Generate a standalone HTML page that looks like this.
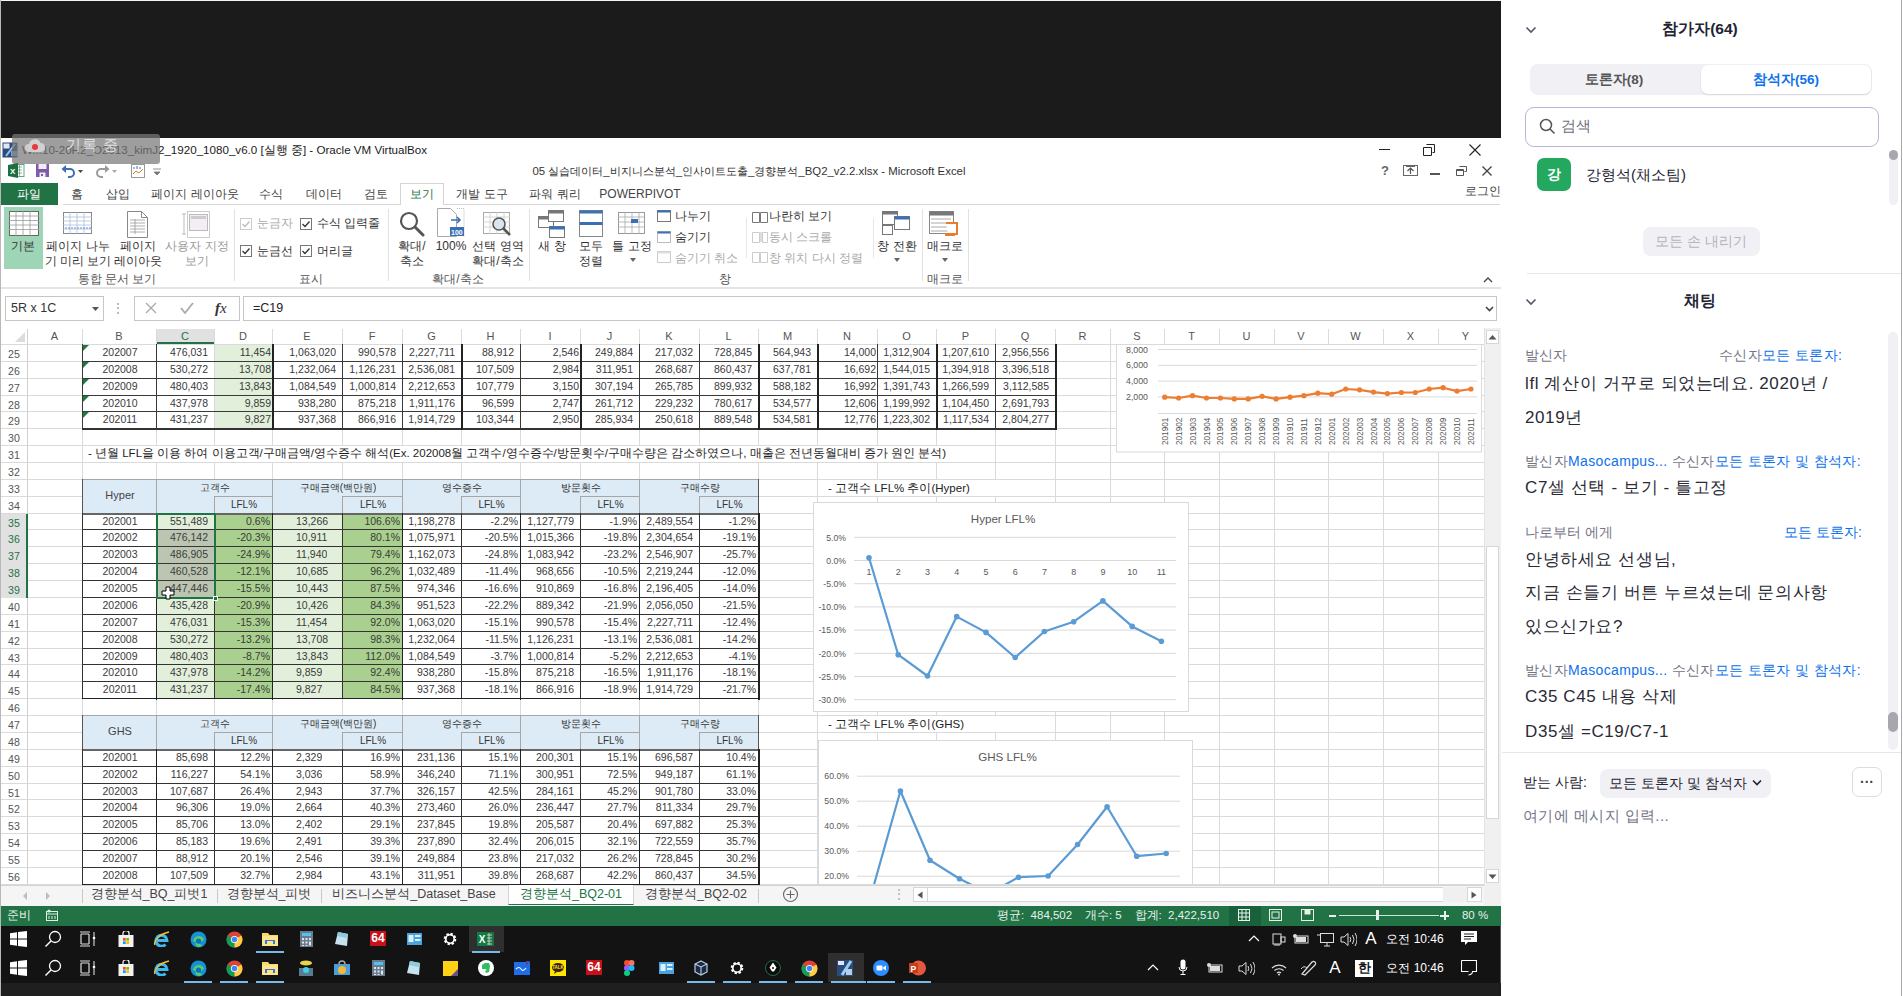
<!DOCTYPE html><html><head><meta charset="utf-8"><style>
html,body{margin:0;padding:0;}
body{width:1903px;height:996px;overflow:hidden;position:relative;background:#fff;font-family:"Liberation Sans",sans-serif;color:#222;}
div{box-sizing:border-box;}
.c{position:absolute;white-space:nowrap;overflow:hidden;font-size:10.5px;line-height:17px;color:#333;}
</style></head><body>
<div style="position:absolute;left:0px;top:0px;width:1903px;height:1px;background:#f4f4f4"></div>
<div style="position:absolute;left:0px;top:1px;width:1501px;height:137px;background:#1b1b1b"></div>
<div style="position:absolute;left:0px;top:0px;width:1px;height:996px;background:#b8b8b8"></div>
<div style="position:absolute;left:1px;top:138px;width:1500px;height:22px;background:#fff"></div>
<svg style="position:absolute;left:2px;top:142px" width="17" height="16" viewBox="0 0 17 16">
<rect x="0.5" y="0.5" width="15" height="15" fill="#2b4a7e"/><rect x="1.5" y="1.5" width="6" height="5" fill="#dfe8f4"/>
<path d="M4 14 L13 2" stroke="#9cc3e8" stroke-width="2"/><rect x="9" y="9" width="6" height="5" fill="#7fa6d0"/></svg>
<div style="position:absolute;left:22px;top:141px;white-space:nowrap;font-size:11.6px;line-height:18px;color:#1a1a1a;">W...10-20H2_O2013_kimJ2_1920_1080_v6.0 [실행 중] - Oracle VM VirtualBox</div>
<div style="position:absolute;left:1379px;top:149px;width:11px;height:1px;background:#222"></div>
<svg style="position:absolute;left:1423px;top:144px" width="12" height="12" viewBox="0 0 12 12"><path d="M3.5 0.5h8v8h-2M0.5 3.5h8v8h-8z" fill="none" stroke="#222" stroke-width="1"/></svg>
<svg style="position:absolute;left:1469px;top:144px" width="12" height="12" viewBox="0 0 12 12"><path d="M0.5 0.5L11.5 11.5M11.5 0.5L0.5 11.5" stroke="#222" stroke-width="1.1"/></svg>
<div style="position:absolute;left:12px;top:134px;width:148px;height:30px;background:rgba(120,120,120,0.72);border-radius:3px"></div>
<svg style="position:absolute;left:24px;top:137px" width="22" height="20" viewBox="0 0 22 20"><path d="M5 15 a4 4 0 0 1 0-8 a6 6 0 0 1 11.5-1 a4.5 4.5 0 0 1 0.5 9z" fill="#d9d9d9" opacity="0.85"/><circle cx="11" cy="10" r="3" fill="#e8383b"/></svg>
<div style="position:absolute;left:66px;top:135px;white-space:nowrap;font-size:15px;line-height:20px;color:rgba(235,235,235,0.9);letter-spacing:1px">기록 중</div>
<svg style="position:absolute;left:8px;top:163px" width="17" height="15" viewBox="0 0 17 15"><rect x="7" y="1.5" width="9" height="12" fill="#fff" stroke="#6aa482"/><path d="M9 4h5M9 7h5M9 10h5M11.5 2v11" stroke="#6aa482" stroke-width="0.8"/><path d="M0 2 L10 0 V15 L0 13z" fill="#1d6f42"/><text x="2" y="11" font-size="8" font-family="Liberation Sans" font-weight="bold" fill="#fff">X</text></svg>
<svg style="position:absolute;left:36px;top:164px" width="13" height="13" viewBox="0 0 13 13"><path d="M0 0h13v13h-13z" fill="#7d5ba6"/><rect x="2.5" y="0" width="8" height="5" fill="#f1edf6"/><rect x="3.5" y="8.5" width="6" height="4.5" fill="#f1edf6"/><rect x="5" y="10" width="2" height="2" fill="#7d5ba6"/></svg>
<svg style="position:absolute;left:61px;top:164px" width="22" height="14" viewBox="0 0 22 14"><path d="M3 5 h6 a4 4 0 0 1 0 8 h-2" fill="none" stroke="#3b6fb6" stroke-width="2"/><path d="M0.5 5 L5 1 V9z" fill="#3b6fb6"/><path d="M17 6 l2.5 3 l2.5-3z" fill="#444"/></svg>
<svg style="position:absolute;left:95px;top:164px" width="22" height="14" viewBox="0 0 22 14"><path d="M12 5 h-6 a4 4 0 0 0 0 8 h2" fill="none" stroke="#9a9a9a" stroke-width="2"/><path d="M14.5 5 L10 1 V9z" fill="#9a9a9a"/><path d="M17 6 l2.5 3 l2.5-3z" fill="#aaa"/></svg>
<svg style="position:absolute;left:131px;top:164px" width="14" height="14" viewBox="0 0 14 14"><rect x="0.5" y="0.5" width="13" height="13" fill="#fff" stroke="#999"/><path d="M2 10 l3-3 l3 2 l4-4" stroke="#e07b2c" fill="none"/><path d="M3 5v-2M6 5v-3M9 5v-2" stroke="#3b6fb6"/></svg>
<svg style="position:absolute;left:153px;top:168px" width="8" height="8" viewBox="0 0 8 8"><path d="M0 1h8M1 4l3 3l3-3z" stroke="#777" fill="#777" stroke-width="0.8"/></svg>
<div style="position:absolute;left:449px;top:163px;width:600px;text-align:center;white-space:nowrap;font-size:11.4px;line-height:17px;color:#333">05 실습데이터_비지니스분석_인사이트도출_경향분석_BQ2_v2.2.xlsx - Microsoft Excel</div>
<div style="position:absolute;left:1085px;top:162px;width:600px;text-align:center;white-space:nowrap;font-size:13px;font-weight:bold;line-height:17px;color:#666">?</div>
<svg style="position:absolute;left:1403px;top:165px" width="15" height="11" viewBox="0 0 15 11"><rect x="0.5" y="0.5" width="14" height="10" fill="none" stroke="#666"/><path d="M7.5 9V3M4.5 6l3-3l3 3" stroke="#555" fill="none" stroke-width="1.2"/><path d="M3 1.5h9" stroke="#666"/></svg>
<div style="position:absolute;left:1430px;top:173px;width:10px;height:1.5px;background:#555"></div>
<svg style="position:absolute;left:1456px;top:166px" width="11" height="10" viewBox="0 0 11 10"><path d="M3.5 0.5h7v5h-2M0.5 3.5h7v6h-7zM0.5 4.5h7" fill="none" stroke="#555"/></svg>
<svg style="position:absolute;left:1482px;top:166px" width="10" height="10" viewBox="0 0 10 10"><path d="M0.5 0.5L9.5 9.5M9.5 0.5L0.5 9.5" stroke="#444" stroke-width="1.4"/></svg>
<div style="position:absolute;left:1px;top:183px;width:57px;height:22px;background:#217346"></div>
<div style="position:absolute;left:-271px;top:184px;width:600px;text-align:center;white-space:nowrap;font-size:12px;line-height:20px;color:#fff">파일</div>
<div style="position:absolute;left:63px;top:204px;width:1437px;height:1px;background:#d6d6d6"></div>
<div style="position:absolute;left:-223px;top:184px;width:600px;text-align:center;white-space:nowrap;font-size:12px;line-height:20px;color:#444">홈</div>
<div style="position:absolute;left:-182px;top:184px;width:600px;text-align:center;white-space:nowrap;font-size:12px;line-height:20px;color:#444">삽입</div>
<div style="position:absolute;left:-105px;top:184px;width:600px;text-align:center;white-space:nowrap;font-size:12px;line-height:20px;color:#444">페이지 레이아웃</div>
<div style="position:absolute;left:-29px;top:184px;width:600px;text-align:center;white-space:nowrap;font-size:12px;line-height:20px;color:#444">수식</div>
<div style="position:absolute;left:24px;top:184px;width:600px;text-align:center;white-space:nowrap;font-size:12px;line-height:20px;color:#444">데이터</div>
<div style="position:absolute;left:76px;top:184px;width:600px;text-align:center;white-space:nowrap;font-size:12px;line-height:20px;color:#444">검토</div>
<div style="position:absolute;left:182px;top:184px;width:600px;text-align:center;white-space:nowrap;font-size:12px;line-height:20px;color:#444">개발 도구</div>
<div style="position:absolute;left:255px;top:184px;width:600px;text-align:center;white-space:nowrap;font-size:12px;line-height:20px;color:#444">파워 쿼리</div>
<div style="position:absolute;left:340px;top:184px;width:600px;text-align:center;white-space:nowrap;font-size:12px;line-height:20px;color:#444">POWERPIVOT</div>
<div style="position:absolute;left:400px;top:183px;width:44px;height:22px;background:#fff;border:1px solid #d4d4d4;border-bottom:none"></div>
<div style="position:absolute;left:122px;top:184px;width:600px;text-align:center;white-space:nowrap;font-size:12px;line-height:20px;color:#217346">보기</div>
<div style="position:absolute;left:1183px;top:183px;width:600px;text-align:center;white-space:nowrap;font-size:11.5px;line-height:17px;color:#444">로그인</div>
<div style="position:absolute;left:1px;top:205px;width:1500px;height:82px;background:#fff"></div>
<div style="position:absolute;left:1px;top:287px;width:1500px;height:2px;background:#e4e4e4"></div>
<div style="position:absolute;left:234px;top:209px;width:1px;height:72px;background:#e1e1e1"></div>
<div style="position:absolute;left:388px;top:209px;width:1px;height:72px;background:#e1e1e1"></div>
<div style="position:absolute;left:529px;top:209px;width:1px;height:72px;background:#e1e1e1"></div>
<div style="position:absolute;left:922px;top:209px;width:1px;height:72px;background:#e1e1e1"></div>
<div style="position:absolute;left:968px;top:209px;width:1px;height:72px;background:#e1e1e1"></div>
<div style="position:absolute;left:746px;top:218px;width:1px;height:40px;background:#e6e6e6"></div>
<div style="position:absolute;left:873px;top:218px;width:1px;height:40px;background:#e6e6e6"></div>
<div style="position:absolute;left:4px;top:207px;width:39px;height:62px;background:#9fd5b7"></div>
<svg style="position:absolute;left:9px;top:211px" width="30" height="25" viewBox="0 0 30 25"><rect x="0.5" y="0.5" width="29" height="24" fill="#fff" stroke="#666"/>
<path d="M0 5h30M0 9.5h30M0 14h30M0 18.5h30M7 0v25M14 0v25M21 0v25" stroke="#999" stroke-width="0.8"/></svg>
<div style="position:absolute;left:-277px;top:238px;width:600px;text-align:center;white-space:nowrap;font-size:12px;line-height:16px;color:#333">기본</div>
<svg style="position:absolute;left:63px;top:212px" width="30" height="23" viewBox="0 0 30 23"><rect x="0.5" y="0.5" width="28" height="21" fill="#fff" stroke="#888"/>
<path d="M0 5h29M0 9h29M0 13h29M0 17h29M7 0v22M14 0v22M21 0v22" stroke="#a9bfde" stroke-width="0.8"/><path d="M2 16h26" stroke="#6f8fc7" stroke-dasharray="2 1"/></svg>
<div style="position:absolute;left:-222px;top:238px;width:600px;text-align:center;white-space:nowrap;font-size:12px;line-height:16px;color:#333">페이지 나누</div>
<div style="position:absolute;left:-222px;top:253px;width:600px;text-align:center;white-space:nowrap;font-size:12px;line-height:16px;color:#333">기 미리 보기</div>
<svg style="position:absolute;left:127px;top:211px" width="22" height="27" viewBox="0 0 22 27"><path d="M0.5 0.5h14l6 6v20h-20z" fill="#fff" stroke="#888"/><path d="M14.5 0.5v6h6" fill="none" stroke="#888"/>
<path d="M3 9h15M3 12h15M3 15h15M3 18h15M3 21h15M8 8v15" stroke="#999" stroke-width="0.8"/></svg>
<div style="position:absolute;left:-162px;top:238px;width:600px;text-align:center;white-space:nowrap;font-size:12px;line-height:16px;color:#333">페이지</div>
<div style="position:absolute;left:-162px;top:253px;width:600px;text-align:center;white-space:nowrap;font-size:12px;line-height:16px;color:#333">레이아웃</div>
<svg style="position:absolute;left:181px;top:211px" width="30" height="27" viewBox="0 0 30 27"><rect x="6.5" y="0.5" width="22" height="26" fill="#fff" stroke="#ccc"/><rect x="8.5" y="3.5" width="18" height="16" fill="#f3eef5" stroke="#bbb"/><rect x="10" y="5" width="15" height="3" fill="#ccc"/><path d="M3 3v20M1 3h4M1 23h4" stroke="#bbb"/></svg>
<div style="position:absolute;left:-103px;top:238px;width:600px;text-align:center;white-space:nowrap;font-size:12px;line-height:16px;color:#999">사용자 지정</div>
<div style="position:absolute;left:-103px;top:253px;width:600px;text-align:center;white-space:nowrap;font-size:12px;line-height:16px;color:#999">보기</div>
<div style="position:absolute;left:-183px;top:271px;width:600px;text-align:center;white-space:nowrap;font-size:12px;line-height:16px;color:#555">통합 문서 보기</div>
<svg style="position:absolute;left:240px;top:218px" width="12" height="12" viewBox="0 0 12 12"><rect x="0.5" y="0.5" width="11" height="11" fill="#fff" stroke="#ccc"/><path d="M2.5 6 l2.5 2.5 l4.5-5" fill="none" stroke="#bbb" stroke-width="1.3"/></svg>
<div style="position:absolute;left:257px;top:215px;white-space:nowrap;font-size:12px;line-height:17px;color:#aaa">눈금자</div>
<svg style="position:absolute;left:300px;top:218px" width="12" height="12" viewBox="0 0 12 12"><rect x="0.5" y="0.5" width="11" height="11" fill="#fff" stroke="#777"/><path d="M2.5 6 l2.5 2.5 l4.5-5" fill="none" stroke="#333" stroke-width="1.3"/></svg>
<div style="position:absolute;left:317px;top:215px;white-space:nowrap;font-size:12px;line-height:17px;color:#333">수식 입력줄</div>
<svg style="position:absolute;left:240px;top:245px" width="12" height="12" viewBox="0 0 12 12"><rect x="0.5" y="0.5" width="11" height="11" fill="#fff" stroke="#777"/><path d="M2.5 6 l2.5 2.5 l4.5-5" fill="none" stroke="#333" stroke-width="1.3"/></svg>
<div style="position:absolute;left:257px;top:243px;white-space:nowrap;font-size:12px;line-height:17px;color:#333">눈금선</div>
<svg style="position:absolute;left:300px;top:245px" width="12" height="12" viewBox="0 0 12 12"><rect x="0.5" y="0.5" width="11" height="11" fill="#fff" stroke="#777"/><path d="M2.5 6 l2.5 2.5 l4.5-5" fill="none" stroke="#333" stroke-width="1.3"/></svg>
<div style="position:absolute;left:317px;top:243px;white-space:nowrap;font-size:12px;line-height:17px;color:#333">머리글</div>
<div style="position:absolute;left:11px;top:271px;width:600px;text-align:center;white-space:nowrap;font-size:12px;line-height:16px;color:#555">표시</div>
<svg style="position:absolute;left:398px;top:211px" width="28" height="26" viewBox="0 0 28 26"><circle cx="11" cy="10" r="8" fill="none" stroke="#555" stroke-width="2.2"/><path d="M17 16 L25 24" stroke="#555" stroke-width="3" stroke-linecap="round"/></svg>
<div style="position:absolute;left:112px;top:238px;width:600px;text-align:center;white-space:nowrap;font-size:12px;line-height:16px;color:#333">확대/</div>
<div style="position:absolute;left:112px;top:253px;width:600px;text-align:center;white-space:nowrap;font-size:12px;line-height:16px;color:#333">축소</div>
<svg style="position:absolute;left:437px;top:208px" width="28" height="30" viewBox="0 0 28 30"><path d="M0.5 0.5h13l6 6v22h-19z" fill="#fff" stroke="#aaa"/><path d="M20 0.5h7v28" fill="none" stroke="#bbb" stroke-dasharray="1 1"/><path d="M14 12h9M20 9l3 3l-3 3" stroke="#3b6fb6" fill="none" stroke-width="1.5"/><rect x="13" y="19" width="14" height="9" fill="#3b6fb6"/><text x="14" y="26.5" font-size="7" fill="#fff" font-family="Liberation Sans" font-weight="bold">100</text></svg>
<div style="position:absolute;left:151px;top:238px;width:600px;text-align:center;white-space:nowrap;font-size:12px;line-height:16px;color:#333">100%</div>
<svg style="position:absolute;left:483px;top:212px" width="30" height="26" viewBox="0 0 30 26"><rect x="0.5" y="0.5" width="26" height="21" fill="#fff" stroke="#aaa"/><path d="M0 5h27M0 10h27M0 15h27M7 0v22M14 0v22M21 0v22" stroke="#ccc" stroke-width="0.8"/><circle cx="16" cy="12" r="6" fill="#dbe4ef" stroke="#555" stroke-width="1.6"/><path d="M20 16 L27 23" stroke="#555" stroke-width="2.5"/></svg>
<div style="position:absolute;left:198px;top:238px;width:600px;text-align:center;white-space:nowrap;font-size:12px;line-height:16px;color:#333">선택 영역</div>
<div style="position:absolute;left:198px;top:253px;width:600px;text-align:center;white-space:nowrap;font-size:12px;line-height:16px;color:#333">확대/축소</div>
<div style="position:absolute;left:158px;top:271px;width:600px;text-align:center;white-space:nowrap;font-size:12px;line-height:16px;color:#555">확대/축소</div>
<svg style="position:absolute;left:538px;top:210px" width="28" height="28" viewBox="0 0 28 28"><rect x="0.5" y="6.5" width="15" height="11" fill="#fff" stroke="#777"/><rect x="0.5" y="6.5" width="15" height="3" fill="#777"/><rect x="10.5" y="0.5" width="15" height="11" fill="#fff" stroke="#777"/><rect x="10.5" y="0.5" width="15" height="3" fill="#777"/><rect x="11.5" y="16.5" width="15" height="11" fill="#fff" stroke="#777"/><rect x="11.5" y="16.5" width="15" height="3" fill="#3b6fb6"/></svg>
<div style="position:absolute;left:252px;top:238px;width:600px;text-align:center;white-space:nowrap;font-size:12px;line-height:16px;color:#333">새 창</div>
<svg style="position:absolute;left:579px;top:210px" width="24" height="27" viewBox="0 0 24 27"><rect x="0.5" y="0.5" width="23" height="26" fill="#fff" stroke="#888"/><rect x="0.5" y="0.5" width="23" height="3" fill="#3b6fb6"/><rect x="0.5" y="12" width="23" height="3" fill="#3b6fb6"/></svg>
<div style="position:absolute;left:291px;top:238px;width:600px;text-align:center;white-space:nowrap;font-size:12px;line-height:16px;color:#333">모두</div>
<div style="position:absolute;left:291px;top:253px;width:600px;text-align:center;white-space:nowrap;font-size:12px;line-height:16px;color:#333">정렬</div>
<svg style="position:absolute;left:618px;top:212px" width="28" height="22" viewBox="0 0 28 22"><rect x="0.5" y="0.5" width="26" height="21" fill="#fff" stroke="#999"/><path d="M0 5h27M0 10h27M0 15h27M7 0v22M14 0v22M21 0v22" stroke="#aaa" stroke-width="0.8"/><rect x="13" y="7" width="7" height="4" fill="#3b6fb6"/></svg>
<div style="position:absolute;left:332px;top:238px;width:600px;text-align:center;white-space:nowrap;font-size:12px;line-height:16px;color:#333">틀 고정</div>
<svg style="position:absolute;left:630px;top:258px" width="6" height="4" viewBox="0 0 6 4"><path d="M0 0h6l-3 4z" fill="#666"/></svg>
<svg style="position:absolute;left:657px;top:210px" width="14" height="12" viewBox="0 0 14 12"><rect x="0.5" y="0.5" width="13" height="11" fill="#fff" stroke="#777" /><rect x="0.5" y="0.5" width="13" height="2" fill="#3b6fb6"/></svg>
<div style="position:absolute;left:675px;top:208px;white-space:nowrap;font-size:12px;line-height:17px;color:#333">나누기</div>
<svg style="position:absolute;left:657px;top:231px" width="14" height="12" viewBox="0 0 14 12"><rect x="0.5" y="0.5" width="13" height="11" fill="#fff" stroke="#777" stroke-dasharray='1 1'/><rect x="0.5" y="0.5" width="13" height="2" fill="#3b6fb6"/></svg>
<div style="position:absolute;left:675px;top:229px;white-space:nowrap;font-size:12px;line-height:17px;color:#333">숨기기</div>
<svg style="position:absolute;left:657px;top:251px" width="14" height="12" viewBox="0 0 14 12"><rect x="0.5" y="0.5" width="13" height="11" fill="#fff" stroke="#ccc" /><rect x="0.5" y="0.5" width="13" height="2" fill="#ddd"/></svg>
<div style="position:absolute;left:675px;top:250px;white-space:nowrap;font-size:12px;line-height:17px;color:#aaa">숨기기 취소</div>
<svg style="position:absolute;left:752px;top:211px" width="16" height="12" viewBox="0 0 16 12"><path d="M0.5 1.5h7v10h-7zM8.5 1.5h7v10h-7z" fill="#fff" stroke="#777"/></svg>
<div style="position:absolute;left:769px;top:208px;white-space:nowrap;font-size:12px;line-height:17px;color:#333">나란히 보기</div>
<svg style="position:absolute;left:752px;top:231px" width="16" height="12" viewBox="0 0 16 12"><path d="M0.5 1.5h7v10h-7zM10.5 1.5h5v10h-5z" fill="#fff" stroke="#ccc"/><path d="M9 1v10" stroke="#bbb"/></svg>
<div style="position:absolute;left:769px;top:229px;white-space:nowrap;font-size:12px;line-height:17px;color:#aaa">동시 스크롤</div>
<svg style="position:absolute;left:752px;top:251px" width="16" height="12" viewBox="0 0 16 12"><path d="M0.5 1.5h7v10h-7zM8.5 1.5h7v10h-7z" fill="#fff" stroke="#ccc"/></svg>
<div style="position:absolute;left:769px;top:250px;white-space:nowrap;font-size:12px;line-height:17px;color:#aaa">창 위치 다시 정렬</div>
<svg style="position:absolute;left:882px;top:211px" width="28" height="25" viewBox="0 0 28 25"><rect x="0.5" y="0.5" width="15" height="13" fill="#fff" stroke="#777"/><rect x="0.5" y="0.5" width="15" height="3" fill="#777"/><rect x="12.5" y="5.5" width="15" height="13" fill="#fff" stroke="#777"/><rect x="12.5" y="5.5" width="15" height="3" fill="#3b6fb6"/><rect x="0.5" y="14.5" width="10" height="9" fill="#fff" stroke="#777"/></svg>
<div style="position:absolute;left:597px;top:238px;width:600px;text-align:center;white-space:nowrap;font-size:12px;line-height:16px;color:#333">창 전환</div>
<svg style="position:absolute;left:894px;top:258px" width="6" height="4" viewBox="0 0 6 4"><path d="M0 0h6l-3 4z" fill="#666"/></svg>
<div style="position:absolute;left:425px;top:271px;width:600px;text-align:center;white-space:nowrap;font-size:12px;line-height:16px;color:#555">창</div>
<svg style="position:absolute;left:929px;top:211px" width="32" height="27" viewBox="0 0 32 27"><rect x="0.5" y="0.5" width="24" height="22" fill="#fff" stroke="#888"/><rect x="0.5" y="0.5" width="24" height="4" fill="#777"/><path d="M2 8h20M2 12h20M2 16h20M2 20h20" stroke="#aaa"/><path d="M17 12h11v11h-9" fill="#fff" stroke="#e87d2b" stroke-width="2"/><rect x="16" y="22" width="10" height="3" fill="#e87d2b"/></svg>
<div style="position:absolute;left:645px;top:238px;width:600px;text-align:center;white-space:nowrap;font-size:12px;line-height:16px;color:#333">매크로</div>
<svg style="position:absolute;left:942px;top:258px" width="6" height="4" viewBox="0 0 6 4"><path d="M0 0h6l-3 4z" fill="#666"/></svg>
<div style="position:absolute;left:645px;top:271px;width:600px;text-align:center;white-space:nowrap;font-size:12px;line-height:16px;color:#555">매크로</div>
<svg style="position:absolute;left:1483px;top:277px" width="10" height="6" viewBox="0 0 10 6"><path d="M1 5l4-4l4 4" fill="none" stroke="#444" stroke-width="1.3"/></svg>
<div style="position:absolute;left:1px;top:292px;width:1500px;height:32px;background:#fff"></div>
<div style="position:absolute;left:5px;top:296px;width:99px;height:25px;background:#fff;border:1px solid #c6c6c6"></div>
<div style="position:absolute;left:11px;top:300px;white-space:nowrap;font-size:12.5px;line-height:17px;color:#333">5R x 1C</div>
<svg style="position:absolute;left:92px;top:307px" width="7" height="4" viewBox="0 0 7 4"><path d="M0 0h7l-3.5 4z" fill="#555"/></svg>
<div style="position:absolute;left:-182px;top:300px;width:600px;text-align:center;white-space:nowrap;font-size:12px;line-height:17px;color:#999">⋮</div>
<div style="position:absolute;left:134px;top:296px;width:106px;height:25px;background:#fff;border:1px solid #c6c6c6"></div>
<svg style="position:absolute;left:145px;top:302px" width="12" height="12" viewBox="0 0 12 12"><path d="M1 1L11 11M11 1L1 11" stroke="#aaa" stroke-width="1.4"/></svg>
<svg style="position:absolute;left:180px;top:302px" width="14" height="12" viewBox="0 0 14 12"><path d="M1 6l4 5l8-10" fill="none" stroke="#aaa" stroke-width="1.8"/></svg>
<div style="position:absolute;left:215px;top:298px;white-space:nowrap;font-family:'Liberation Serif',serif;font-size:15px;line-height:20px;color:#333"><i><b>f</b>x</i></div>
<div style="position:absolute;left:243px;top:296px;width:1254px;height:25px;background:#fff;border:1px solid #c6c6c6"></div>
<div style="position:absolute;left:253px;top:300px;white-space:nowrap;font-size:12.5px;line-height:17px;color:#222">=C19</div>
<svg style="position:absolute;left:1485px;top:306px" width="9" height="6" viewBox="0 0 9 6"><path d="M1 1l3.5 3.5l3.5-3.5" fill="none" stroke="#444" stroke-width="1.6"/></svg>
<div style="position:absolute;left:1px;top:324px;width:1500px;height:4px;background:#fff"></div>
<div style="position:absolute;left:1px;top:328px;width:1483px;height:557px;background:#fff"></div>
<div style="position:absolute;left:1px;top:328px;width:1483px;height:16px;background:#fff"></div>
<div style="position:absolute;left:82px;top:329px;width:1px;height:555px;background:#dadada"></div>
<div style="position:absolute;left:156px;top:329px;width:1px;height:555px;background:#dadada"></div>
<div style="position:absolute;left:214px;top:329px;width:1px;height:555px;background:#dadada"></div>
<div style="position:absolute;left:272px;top:329px;width:1px;height:555px;background:#dadada"></div>
<div style="position:absolute;left:342px;top:329px;width:1px;height:555px;background:#dadada"></div>
<div style="position:absolute;left:402px;top:329px;width:1px;height:555px;background:#dadada"></div>
<div style="position:absolute;left:461px;top:329px;width:1px;height:555px;background:#dadada"></div>
<div style="position:absolute;left:520px;top:329px;width:1px;height:555px;background:#dadada"></div>
<div style="position:absolute;left:580px;top:329px;width:1px;height:555px;background:#dadada"></div>
<div style="position:absolute;left:639px;top:329px;width:1px;height:555px;background:#dadada"></div>
<div style="position:absolute;left:699px;top:329px;width:1px;height:555px;background:#dadada"></div>
<div style="position:absolute;left:758px;top:329px;width:1px;height:555px;background:#dadada"></div>
<div style="position:absolute;left:817px;top:329px;width:1px;height:555px;background:#dadada"></div>
<div style="position:absolute;left:877px;top:329px;width:1px;height:555px;background:#dadada"></div>
<div style="position:absolute;left:936px;top:329px;width:1px;height:555px;background:#dadada"></div>
<div style="position:absolute;left:995px;top:329px;width:1px;height:555px;background:#dadada"></div>
<div style="position:absolute;left:1055px;top:329px;width:1px;height:555px;background:#dadada"></div>
<div style="position:absolute;left:1110px;top:329px;width:1px;height:555px;background:#dadada"></div>
<div style="position:absolute;left:1164px;top:329px;width:1px;height:555px;background:#dadada"></div>
<div style="position:absolute;left:1219px;top:329px;width:1px;height:555px;background:#dadada"></div>
<div style="position:absolute;left:1274px;top:329px;width:1px;height:555px;background:#dadada"></div>
<div style="position:absolute;left:1328px;top:329px;width:1px;height:555px;background:#dadada"></div>
<div style="position:absolute;left:1383px;top:329px;width:1px;height:555px;background:#dadada"></div>
<div style="position:absolute;left:1438px;top:329px;width:1px;height:555px;background:#dadada"></div>
<div style="position:absolute;left:27px;top:329px;width:1px;height:555px;background:#d0d0d0"></div>
<div style="position:absolute;left:1px;top:344px;width:1483px;height:1px;background:#dadada"></div>
<div style="position:absolute;left:1px;top:361px;width:1483px;height:1px;background:#dadada"></div>
<div style="position:absolute;left:1px;top:378px;width:1483px;height:1px;background:#dadada"></div>
<div style="position:absolute;left:1px;top:395px;width:1483px;height:1px;background:#dadada"></div>
<div style="position:absolute;left:1px;top:411px;width:1483px;height:1px;background:#dadada"></div>
<div style="position:absolute;left:1px;top:428px;width:1483px;height:1px;background:#dadada"></div>
<div style="position:absolute;left:1px;top:445px;width:1483px;height:1px;background:#dadada"></div>
<div style="position:absolute;left:1px;top:462px;width:1483px;height:1px;background:#dadada"></div>
<div style="position:absolute;left:1px;top:479px;width:1483px;height:1px;background:#dadada"></div>
<div style="position:absolute;left:1px;top:496px;width:1483px;height:1px;background:#dadada"></div>
<div style="position:absolute;left:1px;top:513px;width:1483px;height:1px;background:#dadada"></div>
<div style="position:absolute;left:1px;top:529px;width:1483px;height:1px;background:#dadada"></div>
<div style="position:absolute;left:1px;top:546px;width:1483px;height:1px;background:#dadada"></div>
<div style="position:absolute;left:1px;top:563px;width:1483px;height:1px;background:#dadada"></div>
<div style="position:absolute;left:1px;top:580px;width:1483px;height:1px;background:#dadada"></div>
<div style="position:absolute;left:1px;top:597px;width:1483px;height:1px;background:#dadada"></div>
<div style="position:absolute;left:1px;top:614px;width:1483px;height:1px;background:#dadada"></div>
<div style="position:absolute;left:1px;top:631px;width:1483px;height:1px;background:#dadada"></div>
<div style="position:absolute;left:1px;top:648px;width:1483px;height:1px;background:#dadada"></div>
<div style="position:absolute;left:1px;top:664px;width:1483px;height:1px;background:#dadada"></div>
<div style="position:absolute;left:1px;top:681px;width:1483px;height:1px;background:#dadada"></div>
<div style="position:absolute;left:1px;top:698px;width:1483px;height:1px;background:#dadada"></div>
<div style="position:absolute;left:1px;top:715px;width:1483px;height:1px;background:#dadada"></div>
<div style="position:absolute;left:1px;top:732px;width:1483px;height:1px;background:#dadada"></div>
<div style="position:absolute;left:1px;top:749px;width:1483px;height:1px;background:#dadada"></div>
<div style="position:absolute;left:1px;top:766px;width:1483px;height:1px;background:#dadada"></div>
<div style="position:absolute;left:1px;top:783px;width:1483px;height:1px;background:#dadada"></div>
<div style="position:absolute;left:1px;top:799px;width:1483px;height:1px;background:#dadada"></div>
<div style="position:absolute;left:1px;top:816px;width:1483px;height:1px;background:#dadada"></div>
<div style="position:absolute;left:1px;top:833px;width:1483px;height:1px;background:#dadada"></div>
<div style="position:absolute;left:1px;top:850px;width:1483px;height:1px;background:#dadada"></div>
<div style="position:absolute;left:1px;top:867px;width:1483px;height:1px;background:#dadada"></div>
<div style="position:absolute;left:1px;top:884px;width:1483px;height:1px;background:#dadada"></div>
<svg style="position:absolute;left:14px;top:331px" width="12" height="12" viewBox="0 0 12 12"><path d="M11 1V11H1z" fill="#dcdcdc"/></svg>
<div style="position:absolute;left:157px;top:329px;width:57px;height:15px;background:#e1e1e1"></div>
<div style="position:absolute;left:157px;top:342px;width:57px;height:2px;background:#217346"></div>
<div class="c" style="left:27px;top:329px;width:55px;height:15px;line-height:15px;text-align:center;font-size:11px;color:#555">A</div>
<div class="c" style="left:82px;top:329px;width:74px;height:15px;line-height:15px;text-align:center;font-size:11px;color:#555">B</div>
<div class="c" style="left:156px;top:329px;width:58px;height:15px;line-height:15px;text-align:center;font-size:11px;color:#217346">C</div>
<div class="c" style="left:214px;top:329px;width:58px;height:15px;line-height:15px;text-align:center;font-size:11px;color:#555">D</div>
<div class="c" style="left:272px;top:329px;width:70px;height:15px;line-height:15px;text-align:center;font-size:11px;color:#555">E</div>
<div class="c" style="left:342px;top:329px;width:60px;height:15px;line-height:15px;text-align:center;font-size:11px;color:#555">F</div>
<div class="c" style="left:402px;top:329px;width:59px;height:15px;line-height:15px;text-align:center;font-size:11px;color:#555">G</div>
<div class="c" style="left:461px;top:329px;width:59px;height:15px;line-height:15px;text-align:center;font-size:11px;color:#555">H</div>
<div class="c" style="left:520px;top:329px;width:60px;height:15px;line-height:15px;text-align:center;font-size:11px;color:#555">I</div>
<div class="c" style="left:580px;top:329px;width:59px;height:15px;line-height:15px;text-align:center;font-size:11px;color:#555">J</div>
<div class="c" style="left:639px;top:329px;width:60px;height:15px;line-height:15px;text-align:center;font-size:11px;color:#555">K</div>
<div class="c" style="left:699px;top:329px;width:59px;height:15px;line-height:15px;text-align:center;font-size:11px;color:#555">L</div>
<div class="c" style="left:758px;top:329px;width:59px;height:15px;line-height:15px;text-align:center;font-size:11px;color:#555">M</div>
<div class="c" style="left:817px;top:329px;width:60px;height:15px;line-height:15px;text-align:center;font-size:11px;color:#555">N</div>
<div class="c" style="left:877px;top:329px;width:59px;height:15px;line-height:15px;text-align:center;font-size:11px;color:#555">O</div>
<div class="c" style="left:936px;top:329px;width:59px;height:15px;line-height:15px;text-align:center;font-size:11px;color:#555">P</div>
<div class="c" style="left:995px;top:329px;width:60px;height:15px;line-height:15px;text-align:center;font-size:11px;color:#555">Q</div>
<div class="c" style="left:1055px;top:329px;width:55px;height:15px;line-height:15px;text-align:center;font-size:11px;color:#555">R</div>
<div class="c" style="left:1110px;top:329px;width:54px;height:15px;line-height:15px;text-align:center;font-size:11px;color:#555">S</div>
<div class="c" style="left:1164px;top:329px;width:55px;height:15px;line-height:15px;text-align:center;font-size:11px;color:#555">T</div>
<div class="c" style="left:1219px;top:329px;width:55px;height:15px;line-height:15px;text-align:center;font-size:11px;color:#555">U</div>
<div class="c" style="left:1274px;top:329px;width:54px;height:15px;line-height:15px;text-align:center;font-size:11px;color:#555">V</div>
<div class="c" style="left:1328px;top:329px;width:55px;height:15px;line-height:15px;text-align:center;font-size:11px;color:#555">W</div>
<div class="c" style="left:1383px;top:329px;width:55px;height:15px;line-height:15px;text-align:center;font-size:11px;color:#555">X</div>
<div class="c" style="left:1438px;top:329px;width:55px;height:15px;line-height:15px;text-align:center;font-size:11px;color:#555">Y</div>
<div class="c" style="left:1px;top:346px;width:26px;height:17px;line-height:17px;text-align:center;font-size:10.6px;color:#555">25</div>
<div class="c" style="left:1px;top:363px;width:26px;height:17px;line-height:17px;text-align:center;font-size:10.6px;color:#555">26</div>
<div class="c" style="left:1px;top:380px;width:26px;height:17px;line-height:17px;text-align:center;font-size:10.6px;color:#555">27</div>
<div class="c" style="left:1px;top:397px;width:26px;height:16px;line-height:16px;text-align:center;font-size:10.6px;color:#555">28</div>
<div class="c" style="left:1px;top:413px;width:26px;height:17px;line-height:17px;text-align:center;font-size:10.6px;color:#555">29</div>
<div class="c" style="left:1px;top:430px;width:26px;height:17px;line-height:17px;text-align:center;font-size:10.6px;color:#555">30</div>
<div class="c" style="left:1px;top:447px;width:26px;height:17px;line-height:17px;text-align:center;font-size:10.6px;color:#555">31</div>
<div class="c" style="left:1px;top:464px;width:26px;height:17px;line-height:17px;text-align:center;font-size:10.6px;color:#555">32</div>
<div class="c" style="left:1px;top:481px;width:26px;height:17px;line-height:17px;text-align:center;font-size:10.6px;color:#555">33</div>
<div class="c" style="left:1px;top:498px;width:26px;height:17px;line-height:17px;text-align:center;font-size:10.6px;color:#555">34</div>
<div style="position:absolute;left:1px;top:514px;width:26px;height:16px;background:#e1e1e1"></div>
<div class="c" style="left:1px;top:515px;width:26px;height:16px;line-height:16px;text-align:center;font-size:10.6px;color:#217346">35</div>
<div style="position:absolute;left:1px;top:530px;width:26px;height:17px;background:#e1e1e1"></div>
<div class="c" style="left:1px;top:531px;width:26px;height:17px;line-height:17px;text-align:center;font-size:10.6px;color:#217346">36</div>
<div style="position:absolute;left:1px;top:547px;width:26px;height:17px;background:#e1e1e1"></div>
<div class="c" style="left:1px;top:548px;width:26px;height:17px;line-height:17px;text-align:center;font-size:10.6px;color:#217346">37</div>
<div style="position:absolute;left:1px;top:564px;width:26px;height:17px;background:#e1e1e1"></div>
<div class="c" style="left:1px;top:565px;width:26px;height:17px;line-height:17px;text-align:center;font-size:10.6px;color:#217346">38</div>
<div style="position:absolute;left:1px;top:581px;width:26px;height:17px;background:#e1e1e1"></div>
<div class="c" style="left:1px;top:582px;width:26px;height:17px;line-height:17px;text-align:center;font-size:10.6px;color:#217346">39</div>
<div class="c" style="left:1px;top:599px;width:26px;height:17px;line-height:17px;text-align:center;font-size:10.6px;color:#555">40</div>
<div class="c" style="left:1px;top:616px;width:26px;height:17px;line-height:17px;text-align:center;font-size:10.6px;color:#555">41</div>
<div class="c" style="left:1px;top:633px;width:26px;height:17px;line-height:17px;text-align:center;font-size:10.6px;color:#555">42</div>
<div class="c" style="left:1px;top:650px;width:26px;height:16px;line-height:16px;text-align:center;font-size:10.6px;color:#555">43</div>
<div class="c" style="left:1px;top:666px;width:26px;height:17px;line-height:17px;text-align:center;font-size:10.6px;color:#555">44</div>
<div class="c" style="left:1px;top:683px;width:26px;height:17px;line-height:17px;text-align:center;font-size:10.6px;color:#555">45</div>
<div class="c" style="left:1px;top:700px;width:26px;height:17px;line-height:17px;text-align:center;font-size:10.6px;color:#555">46</div>
<div class="c" style="left:1px;top:717px;width:26px;height:17px;line-height:17px;text-align:center;font-size:10.6px;color:#555">47</div>
<div class="c" style="left:1px;top:734px;width:26px;height:17px;line-height:17px;text-align:center;font-size:10.6px;color:#555">48</div>
<div class="c" style="left:1px;top:751px;width:26px;height:17px;line-height:17px;text-align:center;font-size:10.6px;color:#555">49</div>
<div class="c" style="left:1px;top:768px;width:26px;height:17px;line-height:17px;text-align:center;font-size:10.6px;color:#555">50</div>
<div class="c" style="left:1px;top:785px;width:26px;height:16px;line-height:16px;text-align:center;font-size:10.6px;color:#555">51</div>
<div class="c" style="left:1px;top:801px;width:26px;height:17px;line-height:17px;text-align:center;font-size:10.6px;color:#555">52</div>
<div class="c" style="left:1px;top:818px;width:26px;height:17px;line-height:17px;text-align:center;font-size:10.6px;color:#555">53</div>
<div class="c" style="left:1px;top:835px;width:26px;height:17px;line-height:17px;text-align:center;font-size:10.6px;color:#555">54</div>
<div class="c" style="left:1px;top:852px;width:26px;height:17px;line-height:17px;text-align:center;font-size:10.6px;color:#555">55</div>
<div class="c" style="left:1px;top:869px;width:26px;height:17px;line-height:17px;text-align:center;font-size:10.6px;color:#555">56</div>
<div style="position:absolute;left:26px;top:514px;width:2px;height:84px;background:#217346"></div>
<div class="c" style="left:83px;width:74px;text-align:center;top:344px;height:17px;line-height:17px;color:#3a3a3a;">202007</div>
<div class="c" style="left:157px;width:51px;text-align:right;top:344px;height:17px;line-height:17px;color:#3a3a3a;">476,031</div>
<div style="position:absolute;left:215px;top:345px;width:58px;height:17px;background:#e2efda"></div>
<div class="c" style="left:215px;width:56px;text-align:right;top:344px;height:17px;line-height:17px;color:#3a3a3a;">11,454</div>
<div class="c" style="left:273px;width:63px;text-align:right;top:344px;height:17px;line-height:17px;color:#3a3a3a;">1,063,020</div>
<div class="c" style="left:343px;width:53px;text-align:right;top:344px;height:17px;line-height:17px;color:#3a3a3a;">990,578</div>
<div class="c" style="left:403px;width:52px;text-align:right;top:344px;height:17px;line-height:17px;color:#3a3a3a;">2,227,711</div>
<div class="c" style="left:462px;width:52px;text-align:right;top:344px;height:17px;line-height:17px;color:#3a3a3a;">88,912</div>
<div class="c" style="left:521px;width:58px;text-align:right;top:344px;height:17px;line-height:17px;color:#3a3a3a;">2,546</div>
<div class="c" style="left:581px;width:52px;text-align:right;top:344px;height:17px;line-height:17px;color:#3a3a3a;">249,884</div>
<div class="c" style="left:640px;width:53px;text-align:right;top:344px;height:17px;line-height:17px;color:#3a3a3a;">217,032</div>
<div class="c" style="left:700px;width:52px;text-align:right;top:344px;height:17px;line-height:17px;color:#3a3a3a;">728,845</div>
<div class="c" style="left:759px;width:52px;text-align:right;top:344px;height:17px;line-height:17px;color:#3a3a3a;">564,943</div>
<div class="c" style="left:818px;width:58px;text-align:right;top:344px;height:17px;line-height:17px;color:#3a3a3a;">14,000</div>
<div class="c" style="left:878px;width:52px;text-align:right;top:344px;height:17px;line-height:17px;color:#3a3a3a;">1,312,904</div>
<div class="c" style="left:937px;width:52px;text-align:right;top:344px;height:17px;line-height:17px;color:#3a3a3a;">1,207,610</div>
<div class="c" style="left:996px;width:53px;text-align:right;top:344px;height:17px;line-height:17px;color:#3a3a3a;">2,956,556</div>
<div class="c" style="left:83px;width:74px;text-align:center;top:361px;height:17px;line-height:17px;color:#3a3a3a;">202008</div>
<div class="c" style="left:157px;width:51px;text-align:right;top:361px;height:17px;line-height:17px;color:#3a3a3a;">530,272</div>
<div style="position:absolute;left:215px;top:362px;width:58px;height:17px;background:#e2efda"></div>
<div class="c" style="left:215px;width:56px;text-align:right;top:361px;height:17px;line-height:17px;color:#3a3a3a;">13,708</div>
<div class="c" style="left:273px;width:63px;text-align:right;top:361px;height:17px;line-height:17px;color:#3a3a3a;">1,232,064</div>
<div class="c" style="left:343px;width:53px;text-align:right;top:361px;height:17px;line-height:17px;color:#3a3a3a;">1,126,231</div>
<div class="c" style="left:403px;width:52px;text-align:right;top:361px;height:17px;line-height:17px;color:#3a3a3a;">2,536,081</div>
<div class="c" style="left:462px;width:52px;text-align:right;top:361px;height:17px;line-height:17px;color:#3a3a3a;">107,509</div>
<div class="c" style="left:521px;width:58px;text-align:right;top:361px;height:17px;line-height:17px;color:#3a3a3a;">2,984</div>
<div class="c" style="left:581px;width:52px;text-align:right;top:361px;height:17px;line-height:17px;color:#3a3a3a;">311,951</div>
<div class="c" style="left:640px;width:53px;text-align:right;top:361px;height:17px;line-height:17px;color:#3a3a3a;">268,687</div>
<div class="c" style="left:700px;width:52px;text-align:right;top:361px;height:17px;line-height:17px;color:#3a3a3a;">860,437</div>
<div class="c" style="left:759px;width:52px;text-align:right;top:361px;height:17px;line-height:17px;color:#3a3a3a;">637,781</div>
<div class="c" style="left:818px;width:58px;text-align:right;top:361px;height:17px;line-height:17px;color:#3a3a3a;">16,692</div>
<div class="c" style="left:878px;width:52px;text-align:right;top:361px;height:17px;line-height:17px;color:#3a3a3a;">1,544,015</div>
<div class="c" style="left:937px;width:52px;text-align:right;top:361px;height:17px;line-height:17px;color:#3a3a3a;">1,394,918</div>
<div class="c" style="left:996px;width:53px;text-align:right;top:361px;height:17px;line-height:17px;color:#3a3a3a;">3,396,518</div>
<div class="c" style="left:83px;width:74px;text-align:center;top:378px;height:17px;line-height:17px;color:#3a3a3a;">202009</div>
<div class="c" style="left:157px;width:51px;text-align:right;top:378px;height:17px;line-height:17px;color:#3a3a3a;">480,403</div>
<div style="position:absolute;left:215px;top:379px;width:58px;height:17px;background:#e2efda"></div>
<div class="c" style="left:215px;width:56px;text-align:right;top:378px;height:17px;line-height:17px;color:#3a3a3a;">13,843</div>
<div class="c" style="left:273px;width:63px;text-align:right;top:378px;height:17px;line-height:17px;color:#3a3a3a;">1,084,549</div>
<div class="c" style="left:343px;width:53px;text-align:right;top:378px;height:17px;line-height:17px;color:#3a3a3a;">1,000,814</div>
<div class="c" style="left:403px;width:52px;text-align:right;top:378px;height:17px;line-height:17px;color:#3a3a3a;">2,212,653</div>
<div class="c" style="left:462px;width:52px;text-align:right;top:378px;height:17px;line-height:17px;color:#3a3a3a;">107,779</div>
<div class="c" style="left:521px;width:58px;text-align:right;top:378px;height:17px;line-height:17px;color:#3a3a3a;">3,150</div>
<div class="c" style="left:581px;width:52px;text-align:right;top:378px;height:17px;line-height:17px;color:#3a3a3a;">307,194</div>
<div class="c" style="left:640px;width:53px;text-align:right;top:378px;height:17px;line-height:17px;color:#3a3a3a;">265,785</div>
<div class="c" style="left:700px;width:52px;text-align:right;top:378px;height:17px;line-height:17px;color:#3a3a3a;">899,932</div>
<div class="c" style="left:759px;width:52px;text-align:right;top:378px;height:17px;line-height:17px;color:#3a3a3a;">588,182</div>
<div class="c" style="left:818px;width:58px;text-align:right;top:378px;height:17px;line-height:17px;color:#3a3a3a;">16,992</div>
<div class="c" style="left:878px;width:52px;text-align:right;top:378px;height:17px;line-height:17px;color:#3a3a3a;">1,391,743</div>
<div class="c" style="left:937px;width:52px;text-align:right;top:378px;height:17px;line-height:17px;color:#3a3a3a;">1,266,599</div>
<div class="c" style="left:996px;width:53px;text-align:right;top:378px;height:17px;line-height:17px;color:#3a3a3a;">3,112,585</div>
<div class="c" style="left:83px;width:74px;text-align:center;top:395px;height:16px;line-height:16px;color:#3a3a3a;">202010</div>
<div class="c" style="left:157px;width:51px;text-align:right;top:395px;height:16px;line-height:16px;color:#3a3a3a;">437,978</div>
<div style="position:absolute;left:215px;top:396px;width:58px;height:16px;background:#e2efda"></div>
<div class="c" style="left:215px;width:56px;text-align:right;top:395px;height:16px;line-height:16px;color:#3a3a3a;">9,859</div>
<div class="c" style="left:273px;width:63px;text-align:right;top:395px;height:16px;line-height:16px;color:#3a3a3a;">938,280</div>
<div class="c" style="left:343px;width:53px;text-align:right;top:395px;height:16px;line-height:16px;color:#3a3a3a;">875,218</div>
<div class="c" style="left:403px;width:52px;text-align:right;top:395px;height:16px;line-height:16px;color:#3a3a3a;">1,911,176</div>
<div class="c" style="left:462px;width:52px;text-align:right;top:395px;height:16px;line-height:16px;color:#3a3a3a;">96,599</div>
<div class="c" style="left:521px;width:58px;text-align:right;top:395px;height:16px;line-height:16px;color:#3a3a3a;">2,747</div>
<div class="c" style="left:581px;width:52px;text-align:right;top:395px;height:16px;line-height:16px;color:#3a3a3a;">261,712</div>
<div class="c" style="left:640px;width:53px;text-align:right;top:395px;height:16px;line-height:16px;color:#3a3a3a;">229,232</div>
<div class="c" style="left:700px;width:52px;text-align:right;top:395px;height:16px;line-height:16px;color:#3a3a3a;">780,617</div>
<div class="c" style="left:759px;width:52px;text-align:right;top:395px;height:16px;line-height:16px;color:#3a3a3a;">534,577</div>
<div class="c" style="left:818px;width:58px;text-align:right;top:395px;height:16px;line-height:16px;color:#3a3a3a;">12,606</div>
<div class="c" style="left:878px;width:52px;text-align:right;top:395px;height:16px;line-height:16px;color:#3a3a3a;">1,199,992</div>
<div class="c" style="left:937px;width:52px;text-align:right;top:395px;height:16px;line-height:16px;color:#3a3a3a;">1,104,450</div>
<div class="c" style="left:996px;width:53px;text-align:right;top:395px;height:16px;line-height:16px;color:#3a3a3a;">2,691,793</div>
<div class="c" style="left:83px;width:74px;text-align:center;top:411px;height:17px;line-height:17px;color:#3a3a3a;">202011</div>
<div class="c" style="left:157px;width:51px;text-align:right;top:411px;height:17px;line-height:17px;color:#3a3a3a;">431,237</div>
<div style="position:absolute;left:215px;top:412px;width:58px;height:17px;background:#e2efda"></div>
<div class="c" style="left:215px;width:56px;text-align:right;top:411px;height:17px;line-height:17px;color:#3a3a3a;">9,827</div>
<div class="c" style="left:273px;width:63px;text-align:right;top:411px;height:17px;line-height:17px;color:#3a3a3a;">937,368</div>
<div class="c" style="left:343px;width:53px;text-align:right;top:411px;height:17px;line-height:17px;color:#3a3a3a;">866,916</div>
<div class="c" style="left:403px;width:52px;text-align:right;top:411px;height:17px;line-height:17px;color:#3a3a3a;">1,914,729</div>
<div class="c" style="left:462px;width:52px;text-align:right;top:411px;height:17px;line-height:17px;color:#3a3a3a;">103,344</div>
<div class="c" style="left:521px;width:58px;text-align:right;top:411px;height:17px;line-height:17px;color:#3a3a3a;">2,950</div>
<div class="c" style="left:581px;width:52px;text-align:right;top:411px;height:17px;line-height:17px;color:#3a3a3a;">285,934</div>
<div class="c" style="left:640px;width:53px;text-align:right;top:411px;height:17px;line-height:17px;color:#3a3a3a;">250,618</div>
<div class="c" style="left:700px;width:52px;text-align:right;top:411px;height:17px;line-height:17px;color:#3a3a3a;">889,548</div>
<div class="c" style="left:759px;width:52px;text-align:right;top:411px;height:17px;line-height:17px;color:#3a3a3a;">534,581</div>
<div class="c" style="left:818px;width:58px;text-align:right;top:411px;height:17px;line-height:17px;color:#3a3a3a;">12,776</div>
<div class="c" style="left:878px;width:52px;text-align:right;top:411px;height:17px;line-height:17px;color:#3a3a3a;">1,223,302</div>
<div class="c" style="left:937px;width:52px;text-align:right;top:411px;height:17px;line-height:17px;color:#3a3a3a;">1,117,534</div>
<div class="c" style="left:996px;width:53px;text-align:right;top:411px;height:17px;line-height:17px;color:#3a3a3a;">2,804,277</div>
<div style="position:absolute;left:82px;top:361px;width:974px;height:1px;background:#3a3a3a"></div>
<div style="position:absolute;left:82px;top:378px;width:974px;height:1px;background:#3a3a3a"></div>
<div style="position:absolute;left:82px;top:395px;width:974px;height:1px;background:#3a3a3a"></div>
<div style="position:absolute;left:82px;top:411px;width:974px;height:1px;background:#3a3a3a"></div>
<div style="position:absolute;left:82px;top:428px;width:974px;height:1px;background:#3a3a3a"></div>
<div style="position:absolute;left:82px;top:428px;width:974px;height:2px;background:#333"></div>
<div style="position:absolute;left:82px;top:344px;width:1px;height:85px;background:#3a3a3a"></div>
<div style="position:absolute;left:156px;top:344px;width:1px;height:85px;background:#3a3a3a"></div>
<div style="position:absolute;left:272px;top:344px;width:1px;height:85px;background:#3a3a3a"></div>
<div style="position:absolute;left:342px;top:344px;width:1px;height:85px;background:#3a3a3a"></div>
<div style="position:absolute;left:402px;top:344px;width:1px;height:85px;background:#3a3a3a"></div>
<div style="position:absolute;left:461px;top:344px;width:1px;height:85px;background:#3a3a3a"></div>
<div style="position:absolute;left:520px;top:344px;width:1px;height:85px;background:#3a3a3a"></div>
<div style="position:absolute;left:580px;top:344px;width:1px;height:85px;background:#3a3a3a"></div>
<div style="position:absolute;left:639px;top:344px;width:1px;height:85px;background:#3a3a3a"></div>
<div style="position:absolute;left:699px;top:344px;width:1px;height:85px;background:#3a3a3a"></div>
<div style="position:absolute;left:758px;top:344px;width:1px;height:85px;background:#3a3a3a"></div>
<div style="position:absolute;left:817px;top:344px;width:1px;height:85px;background:#3a3a3a"></div>
<div style="position:absolute;left:877px;top:344px;width:1px;height:85px;background:#3a3a3a"></div>
<div style="position:absolute;left:936px;top:344px;width:1px;height:85px;background:#3a3a3a"></div>
<div style="position:absolute;left:995px;top:344px;width:1px;height:85px;background:#3a3a3a"></div>
<div style="position:absolute;left:272px;top:344px;width:2px;height:86px;background:#222"></div>
<div style="position:absolute;left:461px;top:344px;width:2px;height:86px;background:#222"></div>
<div style="position:absolute;left:580px;top:344px;width:2px;height:86px;background:#222"></div>
<div style="position:absolute;left:758px;top:344px;width:2px;height:86px;background:#222"></div>
<div style="position:absolute;left:817px;top:344px;width:2px;height:86px;background:#222"></div>
<div style="position:absolute;left:936px;top:344px;width:2px;height:86px;background:#222"></div>
<div style="position:absolute;left:1055px;top:344px;width:2px;height:86px;background:#222"></div>
<svg style="position:absolute;left:83px;top:345px" width="6" height="6" viewBox="0 0 6 6"><path d="M0 0H6L0 6z" fill="#1e7a3a"/></svg>
<svg style="position:absolute;left:83px;top:362px" width="6" height="6" viewBox="0 0 6 6"><path d="M0 0H6L0 6z" fill="#1e7a3a"/></svg>
<svg style="position:absolute;left:83px;top:379px" width="6" height="6" viewBox="0 0 6 6"><path d="M0 0H6L0 6z" fill="#1e7a3a"/></svg>
<svg style="position:absolute;left:83px;top:396px" width="6" height="6" viewBox="0 0 6 6"><path d="M0 0H6L0 6z" fill="#1e7a3a"/></svg>
<svg style="position:absolute;left:83px;top:412px" width="6" height="6" viewBox="0 0 6 6"><path d="M0 0H6L0 6z" fill="#1e7a3a"/></svg>
<div style="position:absolute;left:83px;top:446px;width:873px;height:16px;background:#fff"></div>
<div class="c" style="left:88px;top:445px;height:17px;line-height:17px;color:#3a3a3a;font-size:11.5px;color:#1e1e1e;overflow:visible">- 년월 LFL을 이용 하여 이용고객/구매금액/영수증수 해석(Ex. 202008월 고객수/영수증수/방문횟수/구매수량은 감소하였으나, 매출은 전년동월대비 증가 원인 분석)</div>
<div style="position:absolute;left:83px;top:480px;width:74px;height:34px;background:#ddebf7"></div>
<div class="c" style="left:83px;top:478px;width:74px;height:34px;line-height:34px;text-align:center;font-size:11px;color:#444">Hyper</div>
<div style="position:absolute;left:157px;top:480px;width:116px;height:17px;background:#ddebf7"></div>
<div class="c" style="left:157px;width:116px;text-align:center;top:479px;height:17px;line-height:17px;color:#3a3a3a;font-size:10px;color:#333">고객수</div>
<div style="position:absolute;left:157px;top:497px;width:58px;height:17px;background:#ddebf7"></div>
<div style="position:absolute;left:215px;top:497px;width:58px;height:17px;background:#ddebf7"></div>
<div class="c" style="left:215px;width:58px;text-align:center;top:496px;height:17px;line-height:17px;color:#3a3a3a;font-size:10px;color:#333">LFL%</div>
<div style="position:absolute;left:273px;top:480px;width:130px;height:17px;background:#ddebf7"></div>
<div class="c" style="left:273px;width:130px;text-align:center;top:479px;height:17px;line-height:17px;color:#3a3a3a;font-size:10px;color:#333">구매금액(백만원)</div>
<div style="position:absolute;left:273px;top:497px;width:70px;height:17px;background:#ddebf7"></div>
<div style="position:absolute;left:343px;top:497px;width:60px;height:17px;background:#ddebf7"></div>
<div class="c" style="left:343px;width:60px;text-align:center;top:496px;height:17px;line-height:17px;color:#3a3a3a;font-size:10px;color:#333">LFL%</div>
<div style="position:absolute;left:403px;top:480px;width:118px;height:17px;background:#ddebf7"></div>
<div class="c" style="left:403px;width:118px;text-align:center;top:479px;height:17px;line-height:17px;color:#3a3a3a;font-size:10px;color:#333">영수증수</div>
<div style="position:absolute;left:403px;top:497px;width:59px;height:17px;background:#ddebf7"></div>
<div style="position:absolute;left:462px;top:497px;width:59px;height:17px;background:#ddebf7"></div>
<div class="c" style="left:462px;width:59px;text-align:center;top:496px;height:17px;line-height:17px;color:#3a3a3a;font-size:10px;color:#333">LFL%</div>
<div style="position:absolute;left:521px;top:480px;width:119px;height:17px;background:#ddebf7"></div>
<div class="c" style="left:521px;width:119px;text-align:center;top:479px;height:17px;line-height:17px;color:#3a3a3a;font-size:10px;color:#333">방문횟수</div>
<div style="position:absolute;left:521px;top:497px;width:60px;height:17px;background:#ddebf7"></div>
<div style="position:absolute;left:581px;top:497px;width:59px;height:17px;background:#ddebf7"></div>
<div class="c" style="left:581px;width:59px;text-align:center;top:496px;height:17px;line-height:17px;color:#3a3a3a;font-size:10px;color:#333">LFL%</div>
<div style="position:absolute;left:640px;top:480px;width:119px;height:17px;background:#ddebf7"></div>
<div class="c" style="left:640px;width:119px;text-align:center;top:479px;height:17px;line-height:17px;color:#3a3a3a;font-size:10px;color:#333">구매수량</div>
<div style="position:absolute;left:640px;top:497px;width:60px;height:17px;background:#ddebf7"></div>
<div style="position:absolute;left:700px;top:497px;width:59px;height:17px;background:#ddebf7"></div>
<div class="c" style="left:700px;width:59px;text-align:center;top:496px;height:17px;line-height:17px;color:#3a3a3a;font-size:10px;color:#333">LFL%</div>
<div style="position:absolute;left:82px;top:479px;width:677px;height:1px;background:#a6a6a6"></div>
<div style="position:absolute;left:156px;top:479px;width:1px;height:35px;background:#a6a6a6"></div>
<div style="position:absolute;left:214px;top:496px;width:59px;height:1px;background:#a6a6a6"></div>
<div style="position:absolute;left:214px;top:496px;width:1px;height:18px;background:#a6a6a6"></div>
<div style="position:absolute;left:272px;top:479px;width:1px;height:35px;background:#a6a6a6"></div>
<div style="position:absolute;left:342px;top:496px;width:61px;height:1px;background:#a6a6a6"></div>
<div style="position:absolute;left:342px;top:496px;width:1px;height:18px;background:#a6a6a6"></div>
<div style="position:absolute;left:402px;top:479px;width:1px;height:35px;background:#a6a6a6"></div>
<div style="position:absolute;left:461px;top:496px;width:60px;height:1px;background:#a6a6a6"></div>
<div style="position:absolute;left:461px;top:496px;width:1px;height:18px;background:#a6a6a6"></div>
<div style="position:absolute;left:520px;top:479px;width:1px;height:35px;background:#a6a6a6"></div>
<div style="position:absolute;left:580px;top:496px;width:60px;height:1px;background:#a6a6a6"></div>
<div style="position:absolute;left:580px;top:496px;width:1px;height:18px;background:#a6a6a6"></div>
<div style="position:absolute;left:639px;top:479px;width:1px;height:35px;background:#a6a6a6"></div>
<div style="position:absolute;left:699px;top:496px;width:60px;height:1px;background:#a6a6a6"></div>
<div style="position:absolute;left:699px;top:496px;width:1px;height:18px;background:#a6a6a6"></div>
<div style="position:absolute;left:82px;top:479px;width:1px;height:35px;background:#555"></div>
<div style="position:absolute;left:758px;top:479px;width:1px;height:35px;background:#555"></div>
<div class="c" style="left:83px;width:74px;text-align:center;top:513px;height:16px;line-height:16px;color:#3a3a3a;">202001</div>
<div style="position:absolute;left:157px;top:514px;width:58px;height:16px;background:#e2efda"></div>
<div class="c" style="left:157px;width:51px;text-align:right;top:513px;height:16px;line-height:16px;color:#3a3a3a;">551,489</div>
<div style="position:absolute;left:215px;top:514px;width:58px;height:16px;background:#a9d08e"></div>
<div class="c" style="left:215px;width:55px;text-align:right;top:513px;height:16px;line-height:16px;color:#3a3a3a;">0.6%</div>
<div style="position:absolute;left:273px;top:514px;width:70px;height:16px;background:#e2efda"></div>
<div class="c" style="left:296px;top:513px;height:16px;line-height:16px;color:#3a3a3a;">13,266</div>
<div style="position:absolute;left:343px;top:514px;width:60px;height:16px;background:#a9d08e"></div>
<div class="c" style="left:343px;width:57px;text-align:right;top:513px;height:16px;line-height:16px;color:#3a3a3a;">106.6%</div>
<div class="c" style="left:403px;width:52px;text-align:right;top:513px;height:16px;line-height:16px;color:#3a3a3a;">1,198,278</div>
<div class="c" style="left:462px;width:56px;text-align:right;top:513px;height:16px;line-height:16px;color:#3a3a3a;">-2.2%</div>
<div class="c" style="left:521px;width:53px;text-align:right;top:513px;height:16px;line-height:16px;color:#3a3a3a;">1,127,779</div>
<div class="c" style="left:581px;width:56px;text-align:right;top:513px;height:16px;line-height:16px;color:#3a3a3a;">-1.9%</div>
<div class="c" style="left:640px;width:53px;text-align:right;top:513px;height:16px;line-height:16px;color:#3a3a3a;">2,489,554</div>
<div class="c" style="left:700px;width:56px;text-align:right;top:513px;height:16px;line-height:16px;color:#3a3a3a;">-1.2%</div>
<div class="c" style="left:83px;width:74px;text-align:center;top:529px;height:17px;line-height:17px;color:#3a3a3a;">202002</div>
<div style="position:absolute;left:157px;top:530px;width:58px;height:17px;background:#e2efda"></div>
<div class="c" style="left:157px;width:51px;text-align:right;top:529px;height:17px;line-height:17px;color:#3a3a3a;">476,142</div>
<div style="position:absolute;left:215px;top:530px;width:58px;height:17px;background:#a9d08e"></div>
<div class="c" style="left:215px;width:55px;text-align:right;top:529px;height:17px;line-height:17px;color:#3a3a3a;">-20.3%</div>
<div style="position:absolute;left:273px;top:530px;width:70px;height:17px;background:#e2efda"></div>
<div class="c" style="left:296px;top:529px;height:17px;line-height:17px;color:#3a3a3a;">10,911</div>
<div style="position:absolute;left:343px;top:530px;width:60px;height:17px;background:#a9d08e"></div>
<div class="c" style="left:343px;width:57px;text-align:right;top:529px;height:17px;line-height:17px;color:#3a3a3a;">80.1%</div>
<div class="c" style="left:403px;width:52px;text-align:right;top:529px;height:17px;line-height:17px;color:#3a3a3a;">1,075,971</div>
<div class="c" style="left:462px;width:56px;text-align:right;top:529px;height:17px;line-height:17px;color:#3a3a3a;">-20.5%</div>
<div class="c" style="left:521px;width:53px;text-align:right;top:529px;height:17px;line-height:17px;color:#3a3a3a;">1,015,366</div>
<div class="c" style="left:581px;width:56px;text-align:right;top:529px;height:17px;line-height:17px;color:#3a3a3a;">-19.8%</div>
<div class="c" style="left:640px;width:53px;text-align:right;top:529px;height:17px;line-height:17px;color:#3a3a3a;">2,304,654</div>
<div class="c" style="left:700px;width:56px;text-align:right;top:529px;height:17px;line-height:17px;color:#3a3a3a;">-19.1%</div>
<div class="c" style="left:83px;width:74px;text-align:center;top:546px;height:17px;line-height:17px;color:#3a3a3a;">202003</div>
<div style="position:absolute;left:157px;top:547px;width:58px;height:17px;background:#e2efda"></div>
<div class="c" style="left:157px;width:51px;text-align:right;top:546px;height:17px;line-height:17px;color:#3a3a3a;">486,905</div>
<div style="position:absolute;left:215px;top:547px;width:58px;height:17px;background:#a9d08e"></div>
<div class="c" style="left:215px;width:55px;text-align:right;top:546px;height:17px;line-height:17px;color:#3a3a3a;">-24.9%</div>
<div style="position:absolute;left:273px;top:547px;width:70px;height:17px;background:#e2efda"></div>
<div class="c" style="left:296px;top:546px;height:17px;line-height:17px;color:#3a3a3a;">11,940</div>
<div style="position:absolute;left:343px;top:547px;width:60px;height:17px;background:#a9d08e"></div>
<div class="c" style="left:343px;width:57px;text-align:right;top:546px;height:17px;line-height:17px;color:#3a3a3a;">79.4%</div>
<div class="c" style="left:403px;width:52px;text-align:right;top:546px;height:17px;line-height:17px;color:#3a3a3a;">1,162,073</div>
<div class="c" style="left:462px;width:56px;text-align:right;top:546px;height:17px;line-height:17px;color:#3a3a3a;">-24.8%</div>
<div class="c" style="left:521px;width:53px;text-align:right;top:546px;height:17px;line-height:17px;color:#3a3a3a;">1,083,942</div>
<div class="c" style="left:581px;width:56px;text-align:right;top:546px;height:17px;line-height:17px;color:#3a3a3a;">-23.2%</div>
<div class="c" style="left:640px;width:53px;text-align:right;top:546px;height:17px;line-height:17px;color:#3a3a3a;">2,546,907</div>
<div class="c" style="left:700px;width:56px;text-align:right;top:546px;height:17px;line-height:17px;color:#3a3a3a;">-25.7%</div>
<div class="c" style="left:83px;width:74px;text-align:center;top:563px;height:17px;line-height:17px;color:#3a3a3a;">202004</div>
<div style="position:absolute;left:157px;top:564px;width:58px;height:17px;background:#e2efda"></div>
<div class="c" style="left:157px;width:51px;text-align:right;top:563px;height:17px;line-height:17px;color:#3a3a3a;">460,528</div>
<div style="position:absolute;left:215px;top:564px;width:58px;height:17px;background:#a9d08e"></div>
<div class="c" style="left:215px;width:55px;text-align:right;top:563px;height:17px;line-height:17px;color:#3a3a3a;">-12.1%</div>
<div style="position:absolute;left:273px;top:564px;width:70px;height:17px;background:#e2efda"></div>
<div class="c" style="left:296px;top:563px;height:17px;line-height:17px;color:#3a3a3a;">10,685</div>
<div style="position:absolute;left:343px;top:564px;width:60px;height:17px;background:#a9d08e"></div>
<div class="c" style="left:343px;width:57px;text-align:right;top:563px;height:17px;line-height:17px;color:#3a3a3a;">96.2%</div>
<div class="c" style="left:403px;width:52px;text-align:right;top:563px;height:17px;line-height:17px;color:#3a3a3a;">1,032,489</div>
<div class="c" style="left:462px;width:56px;text-align:right;top:563px;height:17px;line-height:17px;color:#3a3a3a;">-11.4%</div>
<div class="c" style="left:521px;width:53px;text-align:right;top:563px;height:17px;line-height:17px;color:#3a3a3a;">968,656</div>
<div class="c" style="left:581px;width:56px;text-align:right;top:563px;height:17px;line-height:17px;color:#3a3a3a;">-10.5%</div>
<div class="c" style="left:640px;width:53px;text-align:right;top:563px;height:17px;line-height:17px;color:#3a3a3a;">2,219,244</div>
<div class="c" style="left:700px;width:56px;text-align:right;top:563px;height:17px;line-height:17px;color:#3a3a3a;">-12.0%</div>
<div class="c" style="left:83px;width:74px;text-align:center;top:580px;height:17px;line-height:17px;color:#3a3a3a;">202005</div>
<div style="position:absolute;left:157px;top:581px;width:58px;height:17px;background:#e2efda"></div>
<div class="c" style="left:157px;width:51px;text-align:right;top:580px;height:17px;line-height:17px;color:#3a3a3a;">447,446</div>
<div style="position:absolute;left:215px;top:581px;width:58px;height:17px;background:#a9d08e"></div>
<div class="c" style="left:215px;width:55px;text-align:right;top:580px;height:17px;line-height:17px;color:#3a3a3a;">-15.5%</div>
<div style="position:absolute;left:273px;top:581px;width:70px;height:17px;background:#e2efda"></div>
<div class="c" style="left:296px;top:580px;height:17px;line-height:17px;color:#3a3a3a;">10,443</div>
<div style="position:absolute;left:343px;top:581px;width:60px;height:17px;background:#a9d08e"></div>
<div class="c" style="left:343px;width:57px;text-align:right;top:580px;height:17px;line-height:17px;color:#3a3a3a;">87.5%</div>
<div class="c" style="left:403px;width:52px;text-align:right;top:580px;height:17px;line-height:17px;color:#3a3a3a;">974,346</div>
<div class="c" style="left:462px;width:56px;text-align:right;top:580px;height:17px;line-height:17px;color:#3a3a3a;">-16.6%</div>
<div class="c" style="left:521px;width:53px;text-align:right;top:580px;height:17px;line-height:17px;color:#3a3a3a;">910,869</div>
<div class="c" style="left:581px;width:56px;text-align:right;top:580px;height:17px;line-height:17px;color:#3a3a3a;">-16.8%</div>
<div class="c" style="left:640px;width:53px;text-align:right;top:580px;height:17px;line-height:17px;color:#3a3a3a;">2,196,405</div>
<div class="c" style="left:700px;width:56px;text-align:right;top:580px;height:17px;line-height:17px;color:#3a3a3a;">-14.0%</div>
<div class="c" style="left:83px;width:74px;text-align:center;top:597px;height:17px;line-height:17px;color:#3a3a3a;">202006</div>
<div style="position:absolute;left:157px;top:598px;width:58px;height:17px;background:#e2efda"></div>
<div class="c" style="left:157px;width:51px;text-align:right;top:597px;height:17px;line-height:17px;color:#3a3a3a;">435,428</div>
<div style="position:absolute;left:215px;top:598px;width:58px;height:17px;background:#a9d08e"></div>
<div class="c" style="left:215px;width:55px;text-align:right;top:597px;height:17px;line-height:17px;color:#3a3a3a;">-20.9%</div>
<div style="position:absolute;left:273px;top:598px;width:70px;height:17px;background:#e2efda"></div>
<div class="c" style="left:296px;top:597px;height:17px;line-height:17px;color:#3a3a3a;">10,426</div>
<div style="position:absolute;left:343px;top:598px;width:60px;height:17px;background:#a9d08e"></div>
<div class="c" style="left:343px;width:57px;text-align:right;top:597px;height:17px;line-height:17px;color:#3a3a3a;">84.3%</div>
<div class="c" style="left:403px;width:52px;text-align:right;top:597px;height:17px;line-height:17px;color:#3a3a3a;">951,523</div>
<div class="c" style="left:462px;width:56px;text-align:right;top:597px;height:17px;line-height:17px;color:#3a3a3a;">-22.2%</div>
<div class="c" style="left:521px;width:53px;text-align:right;top:597px;height:17px;line-height:17px;color:#3a3a3a;">889,342</div>
<div class="c" style="left:581px;width:56px;text-align:right;top:597px;height:17px;line-height:17px;color:#3a3a3a;">-21.9%</div>
<div class="c" style="left:640px;width:53px;text-align:right;top:597px;height:17px;line-height:17px;color:#3a3a3a;">2,056,050</div>
<div class="c" style="left:700px;width:56px;text-align:right;top:597px;height:17px;line-height:17px;color:#3a3a3a;">-21.5%</div>
<div class="c" style="left:83px;width:74px;text-align:center;top:614px;height:17px;line-height:17px;color:#3a3a3a;">202007</div>
<div style="position:absolute;left:157px;top:615px;width:58px;height:17px;background:#e2efda"></div>
<div class="c" style="left:157px;width:51px;text-align:right;top:614px;height:17px;line-height:17px;color:#3a3a3a;">476,031</div>
<div style="position:absolute;left:215px;top:615px;width:58px;height:17px;background:#a9d08e"></div>
<div class="c" style="left:215px;width:55px;text-align:right;top:614px;height:17px;line-height:17px;color:#3a3a3a;">-15.3%</div>
<div style="position:absolute;left:273px;top:615px;width:70px;height:17px;background:#e2efda"></div>
<div class="c" style="left:296px;top:614px;height:17px;line-height:17px;color:#3a3a3a;">11,454</div>
<div style="position:absolute;left:343px;top:615px;width:60px;height:17px;background:#a9d08e"></div>
<div class="c" style="left:343px;width:57px;text-align:right;top:614px;height:17px;line-height:17px;color:#3a3a3a;">92.0%</div>
<div class="c" style="left:403px;width:52px;text-align:right;top:614px;height:17px;line-height:17px;color:#3a3a3a;">1,063,020</div>
<div class="c" style="left:462px;width:56px;text-align:right;top:614px;height:17px;line-height:17px;color:#3a3a3a;">-15.1%</div>
<div class="c" style="left:521px;width:53px;text-align:right;top:614px;height:17px;line-height:17px;color:#3a3a3a;">990,578</div>
<div class="c" style="left:581px;width:56px;text-align:right;top:614px;height:17px;line-height:17px;color:#3a3a3a;">-15.4%</div>
<div class="c" style="left:640px;width:53px;text-align:right;top:614px;height:17px;line-height:17px;color:#3a3a3a;">2,227,711</div>
<div class="c" style="left:700px;width:56px;text-align:right;top:614px;height:17px;line-height:17px;color:#3a3a3a;">-12.4%</div>
<div class="c" style="left:83px;width:74px;text-align:center;top:631px;height:17px;line-height:17px;color:#3a3a3a;">202008</div>
<div style="position:absolute;left:157px;top:632px;width:58px;height:17px;background:#e2efda"></div>
<div class="c" style="left:157px;width:51px;text-align:right;top:631px;height:17px;line-height:17px;color:#3a3a3a;">530,272</div>
<div style="position:absolute;left:215px;top:632px;width:58px;height:17px;background:#a9d08e"></div>
<div class="c" style="left:215px;width:55px;text-align:right;top:631px;height:17px;line-height:17px;color:#3a3a3a;">-13.2%</div>
<div style="position:absolute;left:273px;top:632px;width:70px;height:17px;background:#e2efda"></div>
<div class="c" style="left:296px;top:631px;height:17px;line-height:17px;color:#3a3a3a;">13,708</div>
<div style="position:absolute;left:343px;top:632px;width:60px;height:17px;background:#a9d08e"></div>
<div class="c" style="left:343px;width:57px;text-align:right;top:631px;height:17px;line-height:17px;color:#3a3a3a;">98.3%</div>
<div class="c" style="left:403px;width:52px;text-align:right;top:631px;height:17px;line-height:17px;color:#3a3a3a;">1,232,064</div>
<div class="c" style="left:462px;width:56px;text-align:right;top:631px;height:17px;line-height:17px;color:#3a3a3a;">-11.5%</div>
<div class="c" style="left:521px;width:53px;text-align:right;top:631px;height:17px;line-height:17px;color:#3a3a3a;">1,126,231</div>
<div class="c" style="left:581px;width:56px;text-align:right;top:631px;height:17px;line-height:17px;color:#3a3a3a;">-13.1%</div>
<div class="c" style="left:640px;width:53px;text-align:right;top:631px;height:17px;line-height:17px;color:#3a3a3a;">2,536,081</div>
<div class="c" style="left:700px;width:56px;text-align:right;top:631px;height:17px;line-height:17px;color:#3a3a3a;">-14.2%</div>
<div class="c" style="left:83px;width:74px;text-align:center;top:648px;height:16px;line-height:16px;color:#3a3a3a;">202009</div>
<div style="position:absolute;left:157px;top:649px;width:58px;height:16px;background:#e2efda"></div>
<div class="c" style="left:157px;width:51px;text-align:right;top:648px;height:16px;line-height:16px;color:#3a3a3a;">480,403</div>
<div style="position:absolute;left:215px;top:649px;width:58px;height:16px;background:#a9d08e"></div>
<div class="c" style="left:215px;width:55px;text-align:right;top:648px;height:16px;line-height:16px;color:#3a3a3a;">-8.7%</div>
<div style="position:absolute;left:273px;top:649px;width:70px;height:16px;background:#e2efda"></div>
<div class="c" style="left:296px;top:648px;height:16px;line-height:16px;color:#3a3a3a;">13,843</div>
<div style="position:absolute;left:343px;top:649px;width:60px;height:16px;background:#a9d08e"></div>
<div class="c" style="left:343px;width:57px;text-align:right;top:648px;height:16px;line-height:16px;color:#3a3a3a;">112.0%</div>
<div class="c" style="left:403px;width:52px;text-align:right;top:648px;height:16px;line-height:16px;color:#3a3a3a;">1,084,549</div>
<div class="c" style="left:462px;width:56px;text-align:right;top:648px;height:16px;line-height:16px;color:#3a3a3a;">-3.7%</div>
<div class="c" style="left:521px;width:53px;text-align:right;top:648px;height:16px;line-height:16px;color:#3a3a3a;">1,000,814</div>
<div class="c" style="left:581px;width:56px;text-align:right;top:648px;height:16px;line-height:16px;color:#3a3a3a;">-5.2%</div>
<div class="c" style="left:640px;width:53px;text-align:right;top:648px;height:16px;line-height:16px;color:#3a3a3a;">2,212,653</div>
<div class="c" style="left:700px;width:56px;text-align:right;top:648px;height:16px;line-height:16px;color:#3a3a3a;">-4.1%</div>
<div class="c" style="left:83px;width:74px;text-align:center;top:664px;height:17px;line-height:17px;color:#3a3a3a;">202010</div>
<div style="position:absolute;left:157px;top:665px;width:58px;height:17px;background:#e2efda"></div>
<div class="c" style="left:157px;width:51px;text-align:right;top:664px;height:17px;line-height:17px;color:#3a3a3a;">437,978</div>
<div style="position:absolute;left:215px;top:665px;width:58px;height:17px;background:#a9d08e"></div>
<div class="c" style="left:215px;width:55px;text-align:right;top:664px;height:17px;line-height:17px;color:#3a3a3a;">-14.2%</div>
<div style="position:absolute;left:273px;top:665px;width:70px;height:17px;background:#e2efda"></div>
<div class="c" style="left:296px;top:664px;height:17px;line-height:17px;color:#3a3a3a;">9,859</div>
<div style="position:absolute;left:343px;top:665px;width:60px;height:17px;background:#a9d08e"></div>
<div class="c" style="left:343px;width:57px;text-align:right;top:664px;height:17px;line-height:17px;color:#3a3a3a;">92.4%</div>
<div class="c" style="left:403px;width:52px;text-align:right;top:664px;height:17px;line-height:17px;color:#3a3a3a;">938,280</div>
<div class="c" style="left:462px;width:56px;text-align:right;top:664px;height:17px;line-height:17px;color:#3a3a3a;">-15.8%</div>
<div class="c" style="left:521px;width:53px;text-align:right;top:664px;height:17px;line-height:17px;color:#3a3a3a;">875,218</div>
<div class="c" style="left:581px;width:56px;text-align:right;top:664px;height:17px;line-height:17px;color:#3a3a3a;">-16.5%</div>
<div class="c" style="left:640px;width:53px;text-align:right;top:664px;height:17px;line-height:17px;color:#3a3a3a;">1,911,176</div>
<div class="c" style="left:700px;width:56px;text-align:right;top:664px;height:17px;line-height:17px;color:#3a3a3a;">-18.1%</div>
<div class="c" style="left:83px;width:74px;text-align:center;top:681px;height:17px;line-height:17px;color:#3a3a3a;">202011</div>
<div style="position:absolute;left:157px;top:682px;width:58px;height:17px;background:#e2efda"></div>
<div class="c" style="left:157px;width:51px;text-align:right;top:681px;height:17px;line-height:17px;color:#3a3a3a;">431,237</div>
<div style="position:absolute;left:215px;top:682px;width:58px;height:17px;background:#a9d08e"></div>
<div class="c" style="left:215px;width:55px;text-align:right;top:681px;height:17px;line-height:17px;color:#3a3a3a;">-17.4%</div>
<div style="position:absolute;left:273px;top:682px;width:70px;height:17px;background:#e2efda"></div>
<div class="c" style="left:296px;top:681px;height:17px;line-height:17px;color:#3a3a3a;">9,827</div>
<div style="position:absolute;left:343px;top:682px;width:60px;height:17px;background:#a9d08e"></div>
<div class="c" style="left:343px;width:57px;text-align:right;top:681px;height:17px;line-height:17px;color:#3a3a3a;">84.5%</div>
<div class="c" style="left:403px;width:52px;text-align:right;top:681px;height:17px;line-height:17px;color:#3a3a3a;">937,368</div>
<div class="c" style="left:462px;width:56px;text-align:right;top:681px;height:17px;line-height:17px;color:#3a3a3a;">-18.1%</div>
<div class="c" style="left:521px;width:53px;text-align:right;top:681px;height:17px;line-height:17px;color:#3a3a3a;">866,916</div>
<div class="c" style="left:581px;width:56px;text-align:right;top:681px;height:17px;line-height:17px;color:#3a3a3a;">-18.9%</div>
<div class="c" style="left:640px;width:53px;text-align:right;top:681px;height:17px;line-height:17px;color:#3a3a3a;">1,914,729</div>
<div class="c" style="left:700px;width:56px;text-align:right;top:681px;height:17px;line-height:17px;color:#3a3a3a;">-21.7%</div>
<div style="position:absolute;left:82px;top:513px;width:677px;height:1px;background:#333"></div>
<div style="position:absolute;left:82px;top:529px;width:677px;height:1px;background:#333"></div>
<div style="position:absolute;left:82px;top:546px;width:677px;height:1px;background:#333"></div>
<div style="position:absolute;left:82px;top:563px;width:677px;height:1px;background:#333"></div>
<div style="position:absolute;left:82px;top:580px;width:677px;height:1px;background:#333"></div>
<div style="position:absolute;left:82px;top:597px;width:677px;height:1px;background:#333"></div>
<div style="position:absolute;left:82px;top:614px;width:677px;height:1px;background:#333"></div>
<div style="position:absolute;left:82px;top:631px;width:677px;height:1px;background:#333"></div>
<div style="position:absolute;left:82px;top:648px;width:677px;height:1px;background:#333"></div>
<div style="position:absolute;left:82px;top:664px;width:677px;height:1px;background:#333"></div>
<div style="position:absolute;left:82px;top:681px;width:677px;height:1px;background:#333"></div>
<div style="position:absolute;left:82px;top:698px;width:677px;height:1px;background:#333"></div>
<div style="position:absolute;left:82px;top:513px;width:677px;height:2px;background:#666"></div>
<div style="position:absolute;left:82px;top:513px;width:1px;height:186px;background:#333"></div>
<div style="position:absolute;left:156px;top:513px;width:1px;height:186px;background:#333"></div>
<div style="position:absolute;left:214px;top:513px;width:1px;height:186px;background:#333"></div>
<div style="position:absolute;left:272px;top:513px;width:1px;height:186px;background:#333"></div>
<div style="position:absolute;left:342px;top:513px;width:1px;height:186px;background:#333"></div>
<div style="position:absolute;left:402px;top:513px;width:1px;height:186px;background:#333"></div>
<div style="position:absolute;left:461px;top:513px;width:1px;height:186px;background:#333"></div>
<div style="position:absolute;left:520px;top:513px;width:1px;height:186px;background:#333"></div>
<div style="position:absolute;left:580px;top:513px;width:1px;height:186px;background:#333"></div>
<div style="position:absolute;left:639px;top:513px;width:1px;height:186px;background:#333"></div>
<div style="position:absolute;left:699px;top:513px;width:1px;height:186px;background:#333"></div>
<div style="position:absolute;left:758px;top:513px;width:2px;height:187px;background:#222"></div>
<div style="position:absolute;left:156px;top:513px;width:1px;height:187px;background:#222"></div>
<div style="position:absolute;left:272px;top:513px;width:1px;height:187px;background:#222"></div>
<div style="position:absolute;left:402px;top:513px;width:1px;height:187px;background:#222"></div>
<div style="position:absolute;left:520px;top:513px;width:1px;height:187px;background:#222"></div>
<div style="position:absolute;left:639px;top:513px;width:1px;height:187px;background:#222"></div>
<div style="position:absolute;left:82px;top:698px;width:677px;height:1px;background:#222"></div>
<div style="position:absolute;left:83px;top:716px;width:74px;height:34px;background:#ddebf7"></div>
<div class="c" style="left:83px;top:714px;width:74px;height:34px;line-height:34px;text-align:center;font-size:11px;color:#444">GHS</div>
<div style="position:absolute;left:157px;top:716px;width:116px;height:17px;background:#ddebf7"></div>
<div class="c" style="left:157px;width:116px;text-align:center;top:715px;height:17px;line-height:17px;color:#3a3a3a;font-size:10px;color:#333">고객수</div>
<div style="position:absolute;left:157px;top:733px;width:58px;height:17px;background:#ddebf7"></div>
<div style="position:absolute;left:215px;top:733px;width:58px;height:17px;background:#ddebf7"></div>
<div class="c" style="left:215px;width:58px;text-align:center;top:732px;height:17px;line-height:17px;color:#3a3a3a;font-size:10px;color:#333">LFL%</div>
<div style="position:absolute;left:273px;top:716px;width:130px;height:17px;background:#ddebf7"></div>
<div class="c" style="left:273px;width:130px;text-align:center;top:715px;height:17px;line-height:17px;color:#3a3a3a;font-size:10px;color:#333">구매금액(백만원)</div>
<div style="position:absolute;left:273px;top:733px;width:70px;height:17px;background:#ddebf7"></div>
<div style="position:absolute;left:343px;top:733px;width:60px;height:17px;background:#ddebf7"></div>
<div class="c" style="left:343px;width:60px;text-align:center;top:732px;height:17px;line-height:17px;color:#3a3a3a;font-size:10px;color:#333">LFL%</div>
<div style="position:absolute;left:403px;top:716px;width:118px;height:17px;background:#ddebf7"></div>
<div class="c" style="left:403px;width:118px;text-align:center;top:715px;height:17px;line-height:17px;color:#3a3a3a;font-size:10px;color:#333">영수증수</div>
<div style="position:absolute;left:403px;top:733px;width:59px;height:17px;background:#ddebf7"></div>
<div style="position:absolute;left:462px;top:733px;width:59px;height:17px;background:#ddebf7"></div>
<div class="c" style="left:462px;width:59px;text-align:center;top:732px;height:17px;line-height:17px;color:#3a3a3a;font-size:10px;color:#333">LFL%</div>
<div style="position:absolute;left:521px;top:716px;width:119px;height:17px;background:#ddebf7"></div>
<div class="c" style="left:521px;width:119px;text-align:center;top:715px;height:17px;line-height:17px;color:#3a3a3a;font-size:10px;color:#333">방문횟수</div>
<div style="position:absolute;left:521px;top:733px;width:60px;height:17px;background:#ddebf7"></div>
<div style="position:absolute;left:581px;top:733px;width:59px;height:17px;background:#ddebf7"></div>
<div class="c" style="left:581px;width:59px;text-align:center;top:732px;height:17px;line-height:17px;color:#3a3a3a;font-size:10px;color:#333">LFL%</div>
<div style="position:absolute;left:640px;top:716px;width:119px;height:17px;background:#ddebf7"></div>
<div class="c" style="left:640px;width:119px;text-align:center;top:715px;height:17px;line-height:17px;color:#3a3a3a;font-size:10px;color:#333">구매수량</div>
<div style="position:absolute;left:640px;top:733px;width:60px;height:17px;background:#ddebf7"></div>
<div style="position:absolute;left:700px;top:733px;width:59px;height:17px;background:#ddebf7"></div>
<div class="c" style="left:700px;width:59px;text-align:center;top:732px;height:17px;line-height:17px;color:#3a3a3a;font-size:10px;color:#333">LFL%</div>
<div style="position:absolute;left:82px;top:715px;width:677px;height:1px;background:#a6a6a6"></div>
<div style="position:absolute;left:156px;top:715px;width:1px;height:35px;background:#a6a6a6"></div>
<div style="position:absolute;left:214px;top:732px;width:59px;height:1px;background:#a6a6a6"></div>
<div style="position:absolute;left:214px;top:732px;width:1px;height:18px;background:#a6a6a6"></div>
<div style="position:absolute;left:272px;top:715px;width:1px;height:35px;background:#a6a6a6"></div>
<div style="position:absolute;left:342px;top:732px;width:61px;height:1px;background:#a6a6a6"></div>
<div style="position:absolute;left:342px;top:732px;width:1px;height:18px;background:#a6a6a6"></div>
<div style="position:absolute;left:402px;top:715px;width:1px;height:35px;background:#a6a6a6"></div>
<div style="position:absolute;left:461px;top:732px;width:60px;height:1px;background:#a6a6a6"></div>
<div style="position:absolute;left:461px;top:732px;width:1px;height:18px;background:#a6a6a6"></div>
<div style="position:absolute;left:520px;top:715px;width:1px;height:35px;background:#a6a6a6"></div>
<div style="position:absolute;left:580px;top:732px;width:60px;height:1px;background:#a6a6a6"></div>
<div style="position:absolute;left:580px;top:732px;width:1px;height:18px;background:#a6a6a6"></div>
<div style="position:absolute;left:639px;top:715px;width:1px;height:35px;background:#a6a6a6"></div>
<div style="position:absolute;left:699px;top:732px;width:60px;height:1px;background:#a6a6a6"></div>
<div style="position:absolute;left:699px;top:732px;width:1px;height:18px;background:#a6a6a6"></div>
<div style="position:absolute;left:82px;top:715px;width:1px;height:35px;background:#555"></div>
<div style="position:absolute;left:758px;top:715px;width:1px;height:35px;background:#555"></div>
<div class="c" style="left:83px;width:74px;text-align:center;top:749px;height:17px;line-height:17px;color:#3a3a3a;">202001</div>
<div class="c" style="left:157px;width:51px;text-align:right;top:749px;height:17px;line-height:17px;color:#3a3a3a;">85,698</div>
<div class="c" style="left:215px;width:55px;text-align:right;top:749px;height:17px;line-height:17px;color:#3a3a3a;">12.2%</div>
<div class="c" style="left:296px;top:749px;height:17px;line-height:17px;color:#3a3a3a;">2,329</div>
<div class="c" style="left:343px;width:57px;text-align:right;top:749px;height:17px;line-height:17px;color:#3a3a3a;">16.9%</div>
<div class="c" style="left:403px;width:52px;text-align:right;top:749px;height:17px;line-height:17px;color:#3a3a3a;">231,136</div>
<div class="c" style="left:462px;width:56px;text-align:right;top:749px;height:17px;line-height:17px;color:#3a3a3a;">15.1%</div>
<div class="c" style="left:521px;width:53px;text-align:right;top:749px;height:17px;line-height:17px;color:#3a3a3a;">200,301</div>
<div class="c" style="left:581px;width:56px;text-align:right;top:749px;height:17px;line-height:17px;color:#3a3a3a;">15.1%</div>
<div class="c" style="left:640px;width:53px;text-align:right;top:749px;height:17px;line-height:17px;color:#3a3a3a;">696,587</div>
<div class="c" style="left:700px;width:56px;text-align:right;top:749px;height:17px;line-height:17px;color:#3a3a3a;">10.4%</div>
<div class="c" style="left:83px;width:74px;text-align:center;top:766px;height:17px;line-height:17px;color:#3a3a3a;">202002</div>
<div class="c" style="left:157px;width:51px;text-align:right;top:766px;height:17px;line-height:17px;color:#3a3a3a;">116,227</div>
<div class="c" style="left:215px;width:55px;text-align:right;top:766px;height:17px;line-height:17px;color:#3a3a3a;">54.1%</div>
<div class="c" style="left:296px;top:766px;height:17px;line-height:17px;color:#3a3a3a;">3,036</div>
<div class="c" style="left:343px;width:57px;text-align:right;top:766px;height:17px;line-height:17px;color:#3a3a3a;">58.9%</div>
<div class="c" style="left:403px;width:52px;text-align:right;top:766px;height:17px;line-height:17px;color:#3a3a3a;">346,240</div>
<div class="c" style="left:462px;width:56px;text-align:right;top:766px;height:17px;line-height:17px;color:#3a3a3a;">71.1%</div>
<div class="c" style="left:521px;width:53px;text-align:right;top:766px;height:17px;line-height:17px;color:#3a3a3a;">300,951</div>
<div class="c" style="left:581px;width:56px;text-align:right;top:766px;height:17px;line-height:17px;color:#3a3a3a;">72.5%</div>
<div class="c" style="left:640px;width:53px;text-align:right;top:766px;height:17px;line-height:17px;color:#3a3a3a;">949,187</div>
<div class="c" style="left:700px;width:56px;text-align:right;top:766px;height:17px;line-height:17px;color:#3a3a3a;">61.1%</div>
<div class="c" style="left:83px;width:74px;text-align:center;top:783px;height:16px;line-height:16px;color:#3a3a3a;">202003</div>
<div class="c" style="left:157px;width:51px;text-align:right;top:783px;height:16px;line-height:16px;color:#3a3a3a;">107,687</div>
<div class="c" style="left:215px;width:55px;text-align:right;top:783px;height:16px;line-height:16px;color:#3a3a3a;">26.4%</div>
<div class="c" style="left:296px;top:783px;height:16px;line-height:16px;color:#3a3a3a;">2,943</div>
<div class="c" style="left:343px;width:57px;text-align:right;top:783px;height:16px;line-height:16px;color:#3a3a3a;">37.7%</div>
<div class="c" style="left:403px;width:52px;text-align:right;top:783px;height:16px;line-height:16px;color:#3a3a3a;">326,157</div>
<div class="c" style="left:462px;width:56px;text-align:right;top:783px;height:16px;line-height:16px;color:#3a3a3a;">42.5%</div>
<div class="c" style="left:521px;width:53px;text-align:right;top:783px;height:16px;line-height:16px;color:#3a3a3a;">284,161</div>
<div class="c" style="left:581px;width:56px;text-align:right;top:783px;height:16px;line-height:16px;color:#3a3a3a;">45.2%</div>
<div class="c" style="left:640px;width:53px;text-align:right;top:783px;height:16px;line-height:16px;color:#3a3a3a;">901,780</div>
<div class="c" style="left:700px;width:56px;text-align:right;top:783px;height:16px;line-height:16px;color:#3a3a3a;">33.0%</div>
<div class="c" style="left:83px;width:74px;text-align:center;top:799px;height:17px;line-height:17px;color:#3a3a3a;">202004</div>
<div class="c" style="left:157px;width:51px;text-align:right;top:799px;height:17px;line-height:17px;color:#3a3a3a;">96,306</div>
<div class="c" style="left:215px;width:55px;text-align:right;top:799px;height:17px;line-height:17px;color:#3a3a3a;">19.0%</div>
<div class="c" style="left:296px;top:799px;height:17px;line-height:17px;color:#3a3a3a;">2,664</div>
<div class="c" style="left:343px;width:57px;text-align:right;top:799px;height:17px;line-height:17px;color:#3a3a3a;">40.3%</div>
<div class="c" style="left:403px;width:52px;text-align:right;top:799px;height:17px;line-height:17px;color:#3a3a3a;">273,460</div>
<div class="c" style="left:462px;width:56px;text-align:right;top:799px;height:17px;line-height:17px;color:#3a3a3a;">26.0%</div>
<div class="c" style="left:521px;width:53px;text-align:right;top:799px;height:17px;line-height:17px;color:#3a3a3a;">236,447</div>
<div class="c" style="left:581px;width:56px;text-align:right;top:799px;height:17px;line-height:17px;color:#3a3a3a;">27.7%</div>
<div class="c" style="left:640px;width:53px;text-align:right;top:799px;height:17px;line-height:17px;color:#3a3a3a;">811,334</div>
<div class="c" style="left:700px;width:56px;text-align:right;top:799px;height:17px;line-height:17px;color:#3a3a3a;">29.7%</div>
<div class="c" style="left:83px;width:74px;text-align:center;top:816px;height:17px;line-height:17px;color:#3a3a3a;">202005</div>
<div class="c" style="left:157px;width:51px;text-align:right;top:816px;height:17px;line-height:17px;color:#3a3a3a;">85,706</div>
<div class="c" style="left:215px;width:55px;text-align:right;top:816px;height:17px;line-height:17px;color:#3a3a3a;">13.0%</div>
<div class="c" style="left:296px;top:816px;height:17px;line-height:17px;color:#3a3a3a;">2,402</div>
<div class="c" style="left:343px;width:57px;text-align:right;top:816px;height:17px;line-height:17px;color:#3a3a3a;">29.1%</div>
<div class="c" style="left:403px;width:52px;text-align:right;top:816px;height:17px;line-height:17px;color:#3a3a3a;">237,845</div>
<div class="c" style="left:462px;width:56px;text-align:right;top:816px;height:17px;line-height:17px;color:#3a3a3a;">19.8%</div>
<div class="c" style="left:521px;width:53px;text-align:right;top:816px;height:17px;line-height:17px;color:#3a3a3a;">205,587</div>
<div class="c" style="left:581px;width:56px;text-align:right;top:816px;height:17px;line-height:17px;color:#3a3a3a;">20.4%</div>
<div class="c" style="left:640px;width:53px;text-align:right;top:816px;height:17px;line-height:17px;color:#3a3a3a;">697,882</div>
<div class="c" style="left:700px;width:56px;text-align:right;top:816px;height:17px;line-height:17px;color:#3a3a3a;">25.3%</div>
<div class="c" style="left:83px;width:74px;text-align:center;top:833px;height:17px;line-height:17px;color:#3a3a3a;">202006</div>
<div class="c" style="left:157px;width:51px;text-align:right;top:833px;height:17px;line-height:17px;color:#3a3a3a;">85,183</div>
<div class="c" style="left:215px;width:55px;text-align:right;top:833px;height:17px;line-height:17px;color:#3a3a3a;">19.6%</div>
<div class="c" style="left:296px;top:833px;height:17px;line-height:17px;color:#3a3a3a;">2,491</div>
<div class="c" style="left:343px;width:57px;text-align:right;top:833px;height:17px;line-height:17px;color:#3a3a3a;">39.3%</div>
<div class="c" style="left:403px;width:52px;text-align:right;top:833px;height:17px;line-height:17px;color:#3a3a3a;">237,890</div>
<div class="c" style="left:462px;width:56px;text-align:right;top:833px;height:17px;line-height:17px;color:#3a3a3a;">32.4%</div>
<div class="c" style="left:521px;width:53px;text-align:right;top:833px;height:17px;line-height:17px;color:#3a3a3a;">206,015</div>
<div class="c" style="left:581px;width:56px;text-align:right;top:833px;height:17px;line-height:17px;color:#3a3a3a;">32.1%</div>
<div class="c" style="left:640px;width:53px;text-align:right;top:833px;height:17px;line-height:17px;color:#3a3a3a;">722,559</div>
<div class="c" style="left:700px;width:56px;text-align:right;top:833px;height:17px;line-height:17px;color:#3a3a3a;">35.7%</div>
<div class="c" style="left:83px;width:74px;text-align:center;top:850px;height:17px;line-height:17px;color:#3a3a3a;">202007</div>
<div class="c" style="left:157px;width:51px;text-align:right;top:850px;height:17px;line-height:17px;color:#3a3a3a;">88,912</div>
<div class="c" style="left:215px;width:55px;text-align:right;top:850px;height:17px;line-height:17px;color:#3a3a3a;">20.1%</div>
<div class="c" style="left:296px;top:850px;height:17px;line-height:17px;color:#3a3a3a;">2,546</div>
<div class="c" style="left:343px;width:57px;text-align:right;top:850px;height:17px;line-height:17px;color:#3a3a3a;">39.1%</div>
<div class="c" style="left:403px;width:52px;text-align:right;top:850px;height:17px;line-height:17px;color:#3a3a3a;">249,884</div>
<div class="c" style="left:462px;width:56px;text-align:right;top:850px;height:17px;line-height:17px;color:#3a3a3a;">23.8%</div>
<div class="c" style="left:521px;width:53px;text-align:right;top:850px;height:17px;line-height:17px;color:#3a3a3a;">217,032</div>
<div class="c" style="left:581px;width:56px;text-align:right;top:850px;height:17px;line-height:17px;color:#3a3a3a;">26.2%</div>
<div class="c" style="left:640px;width:53px;text-align:right;top:850px;height:17px;line-height:17px;color:#3a3a3a;">728,845</div>
<div class="c" style="left:700px;width:56px;text-align:right;top:850px;height:17px;line-height:17px;color:#3a3a3a;">30.2%</div>
<div class="c" style="left:83px;width:74px;text-align:center;top:867px;height:17px;line-height:17px;color:#3a3a3a;">202008</div>
<div class="c" style="left:157px;width:51px;text-align:right;top:867px;height:17px;line-height:17px;color:#3a3a3a;">107,509</div>
<div class="c" style="left:215px;width:55px;text-align:right;top:867px;height:17px;line-height:17px;color:#3a3a3a;">32.7%</div>
<div class="c" style="left:296px;top:867px;height:17px;line-height:17px;color:#3a3a3a;">2,984</div>
<div class="c" style="left:343px;width:57px;text-align:right;top:867px;height:17px;line-height:17px;color:#3a3a3a;">43.1%</div>
<div class="c" style="left:403px;width:52px;text-align:right;top:867px;height:17px;line-height:17px;color:#3a3a3a;">311,951</div>
<div class="c" style="left:462px;width:56px;text-align:right;top:867px;height:17px;line-height:17px;color:#3a3a3a;">39.8%</div>
<div class="c" style="left:521px;width:53px;text-align:right;top:867px;height:17px;line-height:17px;color:#3a3a3a;">268,687</div>
<div class="c" style="left:581px;width:56px;text-align:right;top:867px;height:17px;line-height:17px;color:#3a3a3a;">42.2%</div>
<div class="c" style="left:640px;width:53px;text-align:right;top:867px;height:17px;line-height:17px;color:#3a3a3a;">860,437</div>
<div class="c" style="left:700px;width:56px;text-align:right;top:867px;height:17px;line-height:17px;color:#3a3a3a;">34.5%</div>
<div style="position:absolute;left:82px;top:749px;width:677px;height:1px;background:#333"></div>
<div style="position:absolute;left:82px;top:766px;width:677px;height:1px;background:#333"></div>
<div style="position:absolute;left:82px;top:783px;width:677px;height:1px;background:#333"></div>
<div style="position:absolute;left:82px;top:799px;width:677px;height:1px;background:#333"></div>
<div style="position:absolute;left:82px;top:816px;width:677px;height:1px;background:#333"></div>
<div style="position:absolute;left:82px;top:833px;width:677px;height:1px;background:#333"></div>
<div style="position:absolute;left:82px;top:850px;width:677px;height:1px;background:#333"></div>
<div style="position:absolute;left:82px;top:867px;width:677px;height:1px;background:#333"></div>
<div style="position:absolute;left:82px;top:884px;width:677px;height:1px;background:#333"></div>
<div style="position:absolute;left:82px;top:749px;width:677px;height:2px;background:#666"></div>
<div style="position:absolute;left:82px;top:749px;width:1px;height:136px;background:#333"></div>
<div style="position:absolute;left:156px;top:749px;width:1px;height:136px;background:#333"></div>
<div style="position:absolute;left:214px;top:749px;width:1px;height:136px;background:#333"></div>
<div style="position:absolute;left:272px;top:749px;width:1px;height:136px;background:#333"></div>
<div style="position:absolute;left:342px;top:749px;width:1px;height:136px;background:#333"></div>
<div style="position:absolute;left:402px;top:749px;width:1px;height:136px;background:#333"></div>
<div style="position:absolute;left:461px;top:749px;width:1px;height:136px;background:#333"></div>
<div style="position:absolute;left:520px;top:749px;width:1px;height:136px;background:#333"></div>
<div style="position:absolute;left:580px;top:749px;width:1px;height:136px;background:#333"></div>
<div style="position:absolute;left:639px;top:749px;width:1px;height:136px;background:#333"></div>
<div style="position:absolute;left:699px;top:749px;width:1px;height:136px;background:#333"></div>
<div style="position:absolute;left:758px;top:749px;width:2px;height:137px;background:#222"></div>
<div style="position:absolute;left:156px;top:749px;width:1px;height:137px;background:#222"></div>
<div style="position:absolute;left:272px;top:749px;width:1px;height:137px;background:#222"></div>
<div style="position:absolute;left:402px;top:749px;width:1px;height:137px;background:#222"></div>
<div style="position:absolute;left:520px;top:749px;width:1px;height:137px;background:#222"></div>
<div style="position:absolute;left:639px;top:749px;width:1px;height:137px;background:#222"></div>
<div style="position:absolute;left:82px;top:884px;width:677px;height:1px;background:#222"></div>
<div style="position:absolute;left:157px;top:530px;width:57px;height:67px;background:rgba(70,72,60,0.25)"></div>
<div style="position:absolute;left:156px;top:513px;width:60px;height:86px;border:2px solid #217346;background:transparent"></div>
<div style="position:absolute;left:213px;top:596px;width:5px;height:5px;background:#217346;border:1px solid #fff"></div>
<svg style="position:absolute;left:161px;top:586px" width="14" height="14" viewBox="0 0 14 14"><path d="M5 1h4v4h4v4h-4v4h-4v-4h-4v-4h4z" fill="#fff" stroke="#000" stroke-width="1"/></svg>
<div style="position:absolute;left:818px;top:480px;width:178px;height:16px;background:#fff"></div>
<div style="position:absolute;left:818px;top:716px;width:178px;height:16px;background:#fff"></div>
<div style="position:absolute;left:828px;top:480px;white-space:nowrap;font-size:11.5px;line-height:16px;color:#222">- 고객수 LFL% 추이(Hyper)</div>
<div style="position:absolute;left:828px;top:716px;white-space:nowrap;font-size:11.5px;line-height:16px;color:#222">- 고객수 LFL% 추이(GHS)</div>
<div style="position:absolute;left:1110px;top:345px;width:374px;height:110px;overflow:hidden">
<svg style="position:absolute;left:0;top:0" width="374" height="110" viewBox="1110 345 374 110">
<rect x="1116.5" y="300" width="365" height="152" fill="#fff" stroke="#d9d9d9"/>
<line x1="1158" x2="1477" y1="349.5" y2="349.5" stroke="#d9d9d9" stroke-width="1"/>
<text x="1148" y="352.5" font-size="8.8" text-anchor="end" fill="#595959" font-family="Liberation Sans">8,000</text>
<line x1="1158" x2="1477" y1="365.3" y2="365.3" stroke="#d9d9d9" stroke-width="1"/>
<text x="1148" y="368.3" font-size="8.8" text-anchor="end" fill="#595959" font-family="Liberation Sans">6,000</text>
<line x1="1158" x2="1477" y1="381.1" y2="381.1" stroke="#d9d9d9" stroke-width="1"/>
<text x="1148" y="384.1" font-size="8.8" text-anchor="end" fill="#595959" font-family="Liberation Sans">4,000</text>
<line x1="1158" x2="1477" y1="396.9" y2="396.9" stroke="#d9d9d9" stroke-width="1"/>
<text x="1148" y="399.9" font-size="8.8" text-anchor="end" fill="#595959" font-family="Liberation Sans">2,000</text>
<line x1="1158" x2="1477" y1="413.5" y2="413.5" stroke="#d9d9d9" stroke-width="1"/>
<polyline fill="none" stroke="#ed7d31" stroke-width="2.2" stroke-linejoin="round" points="1164.7,397.2 1178.6,398.0 1192.5,395.7 1206.5,398.0 1220.4,398.0 1234.3,398.9 1248.2,398.9 1262.1,396.3 1276.1,398.9 1290.0,397.2 1303.9,395.7 1317.8,393.2 1331.7,394.2 1345.7,389.0 1359.6,389.8 1373.5,392.1 1387.4,393.6 1401.3,392.5 1415.3,392.5 1429.2,389.0 1443.1,387.7 1457.0,391.1 1470.9,389.0"/>
<circle cx="1164.7" cy="397.2" r="2.6" fill="#ed7d31"/>
<circle cx="1178.6" cy="398.0" r="2.6" fill="#ed7d31"/>
<circle cx="1192.5" cy="395.7" r="2.6" fill="#ed7d31"/>
<circle cx="1206.5" cy="398.0" r="2.6" fill="#ed7d31"/>
<circle cx="1220.4" cy="398.0" r="2.6" fill="#ed7d31"/>
<circle cx="1234.3" cy="398.9" r="2.6" fill="#ed7d31"/>
<circle cx="1248.2" cy="398.9" r="2.6" fill="#ed7d31"/>
<circle cx="1262.1" cy="396.3" r="2.6" fill="#ed7d31"/>
<circle cx="1276.1" cy="398.9" r="2.6" fill="#ed7d31"/>
<circle cx="1290.0" cy="397.2" r="2.6" fill="#ed7d31"/>
<circle cx="1303.9" cy="395.7" r="2.6" fill="#ed7d31"/>
<circle cx="1317.8" cy="393.2" r="2.6" fill="#ed7d31"/>
<circle cx="1331.7" cy="394.2" r="2.6" fill="#ed7d31"/>
<circle cx="1345.7" cy="389.0" r="2.6" fill="#ed7d31"/>
<circle cx="1359.6" cy="389.8" r="2.6" fill="#ed7d31"/>
<circle cx="1373.5" cy="392.1" r="2.6" fill="#ed7d31"/>
<circle cx="1387.4" cy="393.6" r="2.6" fill="#ed7d31"/>
<circle cx="1401.3" cy="392.5" r="2.6" fill="#ed7d31"/>
<circle cx="1415.3" cy="392.5" r="2.6" fill="#ed7d31"/>
<circle cx="1429.2" cy="389.0" r="2.6" fill="#ed7d31"/>
<circle cx="1443.1" cy="387.7" r="2.6" fill="#ed7d31"/>
<circle cx="1457.0" cy="391.1" r="2.6" fill="#ed7d31"/>
<circle cx="1470.9" cy="389.0" r="2.6" fill="#ed7d31"/>
<text transform="translate(1167.7,445) rotate(-90)" font-size="8.2" fill="#595959" font-family="Liberation Sans">201901</text>
<text transform="translate(1181.6,445) rotate(-90)" font-size="8.2" fill="#595959" font-family="Liberation Sans">201902</text>
<text transform="translate(1195.5,445) rotate(-90)" font-size="8.2" fill="#595959" font-family="Liberation Sans">201903</text>
<text transform="translate(1209.5,445) rotate(-90)" font-size="8.2" fill="#595959" font-family="Liberation Sans">201904</text>
<text transform="translate(1223.4,445) rotate(-90)" font-size="8.2" fill="#595959" font-family="Liberation Sans">201905</text>
<text transform="translate(1237.3,445) rotate(-90)" font-size="8.2" fill="#595959" font-family="Liberation Sans">201906</text>
<text transform="translate(1251.2,445) rotate(-90)" font-size="8.2" fill="#595959" font-family="Liberation Sans">201907</text>
<text transform="translate(1265.1,445) rotate(-90)" font-size="8.2" fill="#595959" font-family="Liberation Sans">201908</text>
<text transform="translate(1279.1,445) rotate(-90)" font-size="8.2" fill="#595959" font-family="Liberation Sans">201909</text>
<text transform="translate(1293.0,445) rotate(-90)" font-size="8.2" fill="#595959" font-family="Liberation Sans">201910</text>
<text transform="translate(1306.9,445) rotate(-90)" font-size="8.2" fill="#595959" font-family="Liberation Sans">201911</text>
<text transform="translate(1320.8,445) rotate(-90)" font-size="8.2" fill="#595959" font-family="Liberation Sans">201912</text>
<text transform="translate(1334.7,445) rotate(-90)" font-size="8.2" fill="#595959" font-family="Liberation Sans">202001</text>
<text transform="translate(1348.7,445) rotate(-90)" font-size="8.2" fill="#595959" font-family="Liberation Sans">202002</text>
<text transform="translate(1362.6,445) rotate(-90)" font-size="8.2" fill="#595959" font-family="Liberation Sans">202003</text>
<text transform="translate(1376.5,445) rotate(-90)" font-size="8.2" fill="#595959" font-family="Liberation Sans">202004</text>
<text transform="translate(1390.4,445) rotate(-90)" font-size="8.2" fill="#595959" font-family="Liberation Sans">202005</text>
<text transform="translate(1404.3,445) rotate(-90)" font-size="8.2" fill="#595959" font-family="Liberation Sans">202006</text>
<text transform="translate(1418.3,445) rotate(-90)" font-size="8.2" fill="#595959" font-family="Liberation Sans">202007</text>
<text transform="translate(1432.2,445) rotate(-90)" font-size="8.2" fill="#595959" font-family="Liberation Sans">202008</text>
<text transform="translate(1446.1,445) rotate(-90)" font-size="8.2" fill="#595959" font-family="Liberation Sans">202009</text>
<text transform="translate(1460.0,445) rotate(-90)" font-size="8.2" fill="#595959" font-family="Liberation Sans">202010</text>
<text transform="translate(1473.9,445) rotate(-90)" font-size="8.2" fill="#595959" font-family="Liberation Sans">202011</text>
</svg></div>
<div style="position:absolute;left:813px;top:502px;width:376px;height:210px;overflow:hidden">
<svg style="position:absolute;left:0;top:0" width="376" height="210" viewBox="813 502 376 210">
<rect x="813.5" y="502.5" width="375" height="209" fill="#fff" stroke="#d9d9d9"/>
<text x="1003.0" y="522.5" font-size="11.6" text-anchor="middle" fill="#595959" font-family="Liberation Sans">Hyper LFL%</text>
<line x1="854" x2="1176" y1="537.3" y2="537.3" stroke="#d9d9d9" stroke-width="1"/>
<text x="846" y="540.5" font-size="8.7" text-anchor="end" fill="#595959" font-family="Liberation Sans">5.0%</text>
<line x1="854" x2="1176" y1="560.5" y2="560.5" stroke="#d9d9d9" stroke-width="1"/>
<text x="846" y="563.7" font-size="8.7" text-anchor="end" fill="#595959" font-family="Liberation Sans">0.0%</text>
<line x1="854" x2="1176" y1="583.6999999999999" y2="583.6999999999999" stroke="#d9d9d9" stroke-width="1"/>
<text x="846" y="586.9" font-size="8.7" text-anchor="end" fill="#595959" font-family="Liberation Sans">-5.0%</text>
<line x1="854" x2="1176" y1="606.9" y2="606.9" stroke="#d9d9d9" stroke-width="1"/>
<text x="846" y="610.1" font-size="8.7" text-anchor="end" fill="#595959" font-family="Liberation Sans">-10.0%</text>
<line x1="854" x2="1176" y1="630.0999999999999" y2="630.0999999999999" stroke="#d9d9d9" stroke-width="1"/>
<text x="846" y="633.3" font-size="8.7" text-anchor="end" fill="#595959" font-family="Liberation Sans">-15.0%</text>
<line x1="854" x2="1176" y1="653.3" y2="653.3" stroke="#d9d9d9" stroke-width="1"/>
<text x="846" y="656.5" font-size="8.7" text-anchor="end" fill="#595959" font-family="Liberation Sans">-20.0%</text>
<line x1="854" x2="1176" y1="676.5" y2="676.5" stroke="#d9d9d9" stroke-width="1"/>
<text x="846" y="679.7" font-size="8.7" text-anchor="end" fill="#595959" font-family="Liberation Sans">-25.0%</text>
<line x1="854" x2="1176" y1="699.6999999999999" y2="699.6999999999999" stroke="#d9d9d9" stroke-width="1"/>
<text x="846" y="702.9" font-size="8.7" text-anchor="end" fill="#595959" font-family="Liberation Sans">-30.0%</text>
<text x="869.0" y="575" font-size="9" text-anchor="middle" fill="#595959" font-family="Liberation Sans">1</text>
<text x="898.2" y="575" font-size="9" text-anchor="middle" fill="#595959" font-family="Liberation Sans">2</text>
<text x="927.5" y="575" font-size="9" text-anchor="middle" fill="#595959" font-family="Liberation Sans">3</text>
<text x="956.7" y="575" font-size="9" text-anchor="middle" fill="#595959" font-family="Liberation Sans">4</text>
<text x="986.0" y="575" font-size="9" text-anchor="middle" fill="#595959" font-family="Liberation Sans">5</text>
<text x="1015.2" y="575" font-size="9" text-anchor="middle" fill="#595959" font-family="Liberation Sans">6</text>
<text x="1044.4" y="575" font-size="9" text-anchor="middle" fill="#595959" font-family="Liberation Sans">7</text>
<text x="1073.7" y="575" font-size="9" text-anchor="middle" fill="#595959" font-family="Liberation Sans">8</text>
<text x="1102.9" y="575" font-size="9" text-anchor="middle" fill="#595959" font-family="Liberation Sans">9</text>
<text x="1132.2" y="575" font-size="9" text-anchor="middle" fill="#595959" font-family="Liberation Sans">10</text>
<text x="1161.4" y="575" font-size="9" text-anchor="middle" fill="#595959" font-family="Liberation Sans">11</text>
<polyline fill="none" stroke="#5b9bd5" stroke-width="2.2" stroke-linejoin="round" points="869.0,557.7 898.2,654.7 927.5,676.0 956.7,616.6 986.0,632.4 1015.2,657.5 1044.4,631.5 1073.7,621.7 1102.9,600.9 1132.2,626.4 1161.4,641.2"/>
<circle cx="869.0" cy="557.7" r="2.8" fill="#5b9bd5"/>
<circle cx="898.2" cy="654.7" r="2.8" fill="#5b9bd5"/>
<circle cx="927.5" cy="676.0" r="2.8" fill="#5b9bd5"/>
<circle cx="956.7" cy="616.6" r="2.8" fill="#5b9bd5"/>
<circle cx="986.0" cy="632.4" r="2.8" fill="#5b9bd5"/>
<circle cx="1015.2" cy="657.5" r="2.8" fill="#5b9bd5"/>
<circle cx="1044.4" cy="631.5" r="2.8" fill="#5b9bd5"/>
<circle cx="1073.7" cy="621.7" r="2.8" fill="#5b9bd5"/>
<circle cx="1102.9" cy="600.9" r="2.8" fill="#5b9bd5"/>
<circle cx="1132.2" cy="626.4" r="2.8" fill="#5b9bd5"/>
<circle cx="1161.4" cy="641.2" r="2.8" fill="#5b9bd5"/>
</svg></div>
<div style="position:absolute;left:818px;top:740px;width:375px;height:144px;overflow:hidden">
<svg style="position:absolute;left:0;top:0" width="375" height="144" viewBox="818 740 375 144">
<rect x="818.5" y="740.5" width="374" height="219" fill="#fff" stroke="#d9d9d9"/>
<text x="1007.5" y="761" font-size="11.6" text-anchor="middle" fill="#595959" font-family="Liberation Sans">GHS LFL%</text>
<line x1="857" x2="1180" y1="776.2" y2="776.2" stroke="#d9d9d9" stroke-width="1"/>
<text x="849" y="779.4000000000001" font-size="8.7" text-anchor="end" fill="#595959" font-family="Liberation Sans">60.0%</text>
<line x1="857" x2="1180" y1="801.2" y2="801.2" stroke="#d9d9d9" stroke-width="1"/>
<text x="849" y="804.4000000000001" font-size="8.7" text-anchor="end" fill="#595959" font-family="Liberation Sans">50.0%</text>
<line x1="857" x2="1180" y1="826.2" y2="826.2" stroke="#d9d9d9" stroke-width="1"/>
<text x="849" y="829.4000000000001" font-size="8.7" text-anchor="end" fill="#595959" font-family="Liberation Sans">40.0%</text>
<line x1="857" x2="1180" y1="851.2" y2="851.2" stroke="#d9d9d9" stroke-width="1"/>
<text x="849" y="854.4000000000001" font-size="8.7" text-anchor="end" fill="#595959" font-family="Liberation Sans">30.0%</text>
<line x1="857" x2="1180" y1="876.2" y2="876.2" stroke="#d9d9d9" stroke-width="1"/>
<text x="849" y="879.4000000000001" font-size="8.7" text-anchor="end" fill="#595959" font-family="Liberation Sans">20.0%</text>
<line x1="857" x2="1180" y1="901.2" y2="901.2" stroke="#d9d9d9" stroke-width="1"/>
<text x="849" y="904.4000000000001" font-size="8.7" text-anchor="end" fill="#595959" font-family="Liberation Sans">10.0%</text>
<line x1="857" x2="1180" y1="926.2" y2="926.2" stroke="#d9d9d9" stroke-width="1"/>
<text x="849" y="929.4000000000001" font-size="8.7" text-anchor="end" fill="#595959" font-family="Liberation Sans">0.0%</text>
<polyline fill="none" stroke="#5b9bd5" stroke-width="2.2" stroke-linejoin="round" points="870.9,895.7 900.4,791.0 930.0,860.2 959.5,878.7 989.0,893.7 1018.5,877.2 1048.1,876.0 1077.6,844.5 1107.1,806.7 1136.7,856.2 1166.2,853.5"/>
<circle cx="870.9" cy="895.7" r="2.8" fill="#5b9bd5"/>
<circle cx="900.4" cy="791.0" r="2.8" fill="#5b9bd5"/>
<circle cx="930.0" cy="860.2" r="2.8" fill="#5b9bd5"/>
<circle cx="959.5" cy="878.7" r="2.8" fill="#5b9bd5"/>
<circle cx="989.0" cy="893.7" r="2.8" fill="#5b9bd5"/>
<circle cx="1018.5" cy="877.2" r="2.8" fill="#5b9bd5"/>
<circle cx="1048.1" cy="876.0" r="2.8" fill="#5b9bd5"/>
<circle cx="1077.6" cy="844.5" r="2.8" fill="#5b9bd5"/>
<circle cx="1107.1" cy="806.7" r="2.8" fill="#5b9bd5"/>
<circle cx="1136.7" cy="856.2" r="2.8" fill="#5b9bd5"/>
<circle cx="1166.2" cy="853.5" r="2.8" fill="#5b9bd5"/>
</svg></div>
<div style="position:absolute;left:1484px;top:328px;width:17px;height:557px;background:#f0f0f0;border-left:1px solid #e3e3e3"></div>
<div style="position:absolute;left:1486px;top:330px;width:13px;height:14px;background:#fff;border:1px solid #d6d6d6"></div>
<svg style="position:absolute;left:1488px;top:334px" width="9" height="6" viewBox="0 0 9 6"><path d="M0.5 5.5L4.5 1L8.5 5.5z" fill="#555"/></svg>
<div style="position:absolute;left:1486px;top:546px;width:13px;height:273px;background:#fff;border:1px solid #d6d6d6"></div>
<div style="position:absolute;left:1486px;top:869px;width:13px;height:14px;background:#fff;border:1px solid #d6d6d6"></div>
<svg style="position:absolute;left:1488px;top:874px" width="9" height="6" viewBox="0 0 9 6"><path d="M0.5 0.5L4.5 5L8.5 0.5z" fill="#555"/></svg>
<div style="position:absolute;left:1px;top:885px;width:1483px;height:21px;background:#f5f5f5"></div>
<div style="position:absolute;left:1px;top:885px;width:1500px;height:1px;background:#d4d4d4"></div>
<svg style="position:absolute;left:22px;top:891px" width="30" height="10" viewBox="0 0 30 10"><path d="M5 1L1 5L5 9z" fill="#bdbdbd"/><path d="M24 1L28 5L24 9z" fill="#bdbdbd"/></svg>
<div style="position:absolute;left:-151px;top:885px;width:600px;text-align:center;white-space:nowrap;font-size:12.5px;line-height:18px;color:#444">경향분석_BQ_피벗1</div>
<div style="position:absolute;left:217px;top:889px;width:1px;height:14px;background:#c8c8c8"></div>
<div style="position:absolute;left:-31px;top:885px;width:600px;text-align:center;white-space:nowrap;font-size:12.5px;line-height:18px;color:#444">경향분석_피벗</div>
<div style="position:absolute;left:321px;top:889px;width:1px;height:14px;background:#c8c8c8"></div>
<div style="position:absolute;left:114px;top:885px;width:600px;text-align:center;white-space:nowrap;font-size:12.5px;line-height:18px;color:#444">비즈니스분석_Dataset_Base</div>
<div style="position:absolute;left:508px;top:889px;width:1px;height:14px;background:#c8c8c8"></div>
<div style="position:absolute;left:508px;top:885px;width:126px;height:20px;background:#fff;border-bottom:1.5px solid #217346;border-left:1px solid #d4d4d4;border-right:1px solid #d4d4d4"></div>
<div style="position:absolute;left:271px;top:885px;width:600px;text-align:center;white-space:nowrap;font-size:12.5px;line-height:18px;color:#217346">경향분석_BQ2-01</div>
<div style="position:absolute;left:396px;top:885px;width:600px;text-align:center;white-space:nowrap;font-size:12.5px;line-height:18px;color:#444">경향분석_BQ2-02</div>
<div style="position:absolute;left:758px;top:889px;width:1px;height:14px;background:#c8c8c8"></div>
<div style="position:absolute;left:82px;top:889px;width:1px;height:14px;background:#c8c8c8"></div>
<svg style="position:absolute;left:782px;top:886px" width="17" height="17" viewBox="0 0 17 17"><circle cx="8.5" cy="8.5" r="7" fill="none" stroke="#666" stroke-width="1.1"/><path d="M8.5 4.5v8M4.5 8.5h8" stroke="#666" stroke-width="1.1"/></svg>
<div style="position:absolute;left:599px;top:886px;width:600px;text-align:center;white-space:nowrap;font-size:12px;line-height:17px;color:#aaa">⋮</div>
<div style="position:absolute;left:913px;top:887px;width:569px;height:15px;background:#fff;border:1px solid #d6d6d6"></div>
<div style="position:absolute;left:913px;top:887px;width:15px;height:15px;background:#fff;border:1px solid #d6d6d6"></div>
<svg style="position:absolute;left:917px;top:891px" width="6" height="8" viewBox="0 0 6 8"><path d="M5.5 0.5L0.5 4L5.5 7.5z" fill="#555"/></svg>
<div style="position:absolute;left:1443px;top:887px;width:24px;height:15px;background:#f0f0f0"></div>
<div style="position:absolute;left:1467px;top:887px;width:15px;height:15px;background:#fff;border:1px solid #d6d6d6"></div>
<svg style="position:absolute;left:1471px;top:891px" width="6" height="8" viewBox="0 0 6 8"><path d="M0.5 0.5L5.5 4L0.5 7.5z" fill="#555"/></svg>
<div style="position:absolute;left:1484px;top:885px;width:17px;height:21px;background:#f0f0f0"></div>
<div style="position:absolute;left:1px;top:906px;width:1500px;height:20px;background:#217346"></div>
<div style="position:absolute;left:7px;top:906px;white-space:nowrap;font-size:11.5px;line-height:19px;color:#e8f1ec">준비</div>
<svg style="position:absolute;left:46px;top:909px" width="12" height="12" viewBox="0 0 12 12"><rect x="0.5" y="2.5" width="11" height="9" fill="none" stroke="#dfeee5"/><path d="M0.5 5h11M3 7v3M6 7v3M9 7v3" stroke="#dfeee5"/><circle cx="3" cy="2" r="1.6" fill="#dfeee5"/></svg>
<div style="position:absolute;left:997px;top:906px;white-space:nowrap;font-size:11.5px;line-height:19px;color:#e8f1ec">평균:&nbsp; 484,502&nbsp;&nbsp;&nbsp; 개수: 5&nbsp;&nbsp;&nbsp; 합계:&nbsp; 2,422,510</div>
<div style="position:absolute;left:1229px;top:906px;width:32px;height:20px;background:#19613a"></div>
<svg style="position:absolute;left:1238px;top:909px" width="12" height="12" viewBox="0 0 12 12"><rect x="0.5" y="0.5" width="11" height="11" fill="none" stroke="#e8f1ec"/><path d="M0 4h12M0 8h12M4 0v12M8 0v12" stroke="#e8f1ec"/></svg>
<svg style="position:absolute;left:1269px;top:909px" width="13" height="12" viewBox="0 0 13 12"><rect x="0.5" y="0.5" width="12" height="11" fill="none" stroke="#e8f1ec"/><rect x="3" y="3" width="7" height="6" fill="none" stroke="#e8f1ec"/></svg>
<svg style="position:absolute;left:1301px;top:909px" width="13" height="12" viewBox="0 0 13 12"><rect x="0.5" y="0.5" width="12" height="11" fill="none" stroke="#e8f1ec"/><rect x="3.5" y="0.5" width="6" height="5" fill="#e8f1ec"/></svg>
<div style="position:absolute;left:1329px;top:915px;width:7px;height:1.5px;background:#e8f1ec"></div>
<div style="position:absolute;left:1339px;top:915px;width:100px;height:1px;background:#cfe3d7"></div>
<div style="position:absolute;left:1376px;top:910px;width:3px;height:10px;background:#e8f1ec"></div>
<div style="position:absolute;left:1440px;top:915px;width:9px;height:1.5px;background:#e8f1ec"></div>
<div style="position:absolute;left:1444px;top:911px;width:1.5px;height:9px;background:#e8f1ec"></div>
<div style="position:absolute;left:1175px;top:906px;width:600px;text-align:center;white-space:nowrap;font-size:11.5px;line-height:19px;color:#e8f1ec">80 %</div>
<div style="position:absolute;left:1px;top:926px;width:1500px;height:27px;background:#141314"></div>
<div style="position:absolute;left:1px;top:953px;width:1500px;height:30px;background:#141314"></div>
<div style="position:absolute;left:1px;top:983px;width:1500px;height:13px;background:#1f1f1f"></div>
<div style="position:absolute;left:1500px;top:926px;width:1px;height:57px;background:#555"></div>
<div style="position:absolute;left:469px;top:926px;width:35px;height:26px;background:#2f2f2f"></div>
<div style="position:absolute;left:828px;top:953px;width:36px;height:29px;background:#2f2f2f"></div>
<svg style="position:absolute;left:10px;top:931px" width="17" height="16" viewBox="0 0 17 16"><path d="M0 2.2L7 1.2V7.5H0zM8 1L17 0V7.5H8zM0 8.5H7V14.8L0 13.8zM8 8.5H17V16L8 15z" fill="#fff"/></svg>
<svg style="position:absolute;left:44px;top:930px" width="18" height="18" viewBox="0 0 18 18"><circle cx="11" cy="7" r="5.5" fill="none" stroke="#fff" stroke-width="1.3"/><path d="M7 11L1.5 16.5" stroke="#fff" stroke-width="1.4"/></svg>
<svg style="position:absolute;left:79px;top:931px" width="18" height="16" viewBox="0 0 18 16"><path d="M1 1h10M1 15h10M2 3v10M10 3v10M2 3h8M2 13h8" stroke="#ddd" stroke-width="1.2" fill="none"/><path d="M15 1v14" stroke="#ddd" stroke-width="1.1"/><circle cx="15" cy="7" r="1.3" fill="#fff"/></svg>
<svg style="position:absolute;left:118px;top:931px" width="16" height="16" viewBox="0 0 16 16"><path d="M5 4V2.5a3 3 0 0 1 6 0V4" fill="none" stroke="#eee" stroke-width="1.3"/><rect x="0.5" y="4" width="15" height="12" fill="#f2f2f2"/><rect x="5" y="7" width="2.7" height="2.7" fill="#f25022"/><rect x="8.3" y="7" width="2.7" height="2.7" fill="#7fba00"/><rect x="5" y="10.3" width="2.7" height="2.7" fill="#00a4ef"/><rect x="8.3" y="10.3" width="2.7" height="2.7" fill="#ffb900"/></svg>
<svg style="position:absolute;left:153px;top:931px" width="18" height="16" viewBox="0 0 18 16"><path d="M3 9.5h11a5.5 5.5 0 1 0-1.5 4" fill="none" stroke="#3fb9ec" stroke-width="3"/><path d="M2 14C0 11 6 3 16 1" fill="none" stroke="#f3c13a" stroke-width="1.3"/></svg>
<svg style="position:absolute;left:190px;top:931px" width="17" height="17" viewBox="0 0 17 17"><circle cx="8.5" cy="8.5" r="8" fill="#1591d8"/><path d="M3 10a6 6 0 0 1 11-2a4 4 0 0 1-4 3H6a3 3 0 0 0 6 3" fill="#5ed35c" opacity="0.9"/><circle cx="8.5" cy="10" r="2.6" fill="#0c6fbf"/></svg>
<svg style="position:absolute;left:226px;top:931px" width="17" height="17" viewBox="0 0 17 17"><circle cx="8.5" cy="8.5" r="8" fill="#db4437"/><path d="M8.5 8.5L1.6 4.5A8 8 0 0 0 8.5 16.5z" fill="#0f9d58"/><path d="M8.5 8.5L8.5 16.5A8 8 0 0 0 15.4 4.5z" fill="#ffcd40"/><circle cx="8.5" cy="8.5" r="3.6" fill="#fff"/><circle cx="8.5" cy="8.5" r="2.8" fill="#4285f4"/></svg>
<svg style="position:absolute;left:262px;top:932px" width="16" height="14" viewBox="0 0 16 14"><path d="M0 1h6l1.5 2H16v11H0z" fill="#f8d775"/><path d="M0 4h16v10H0z" fill="#ffe38a"/><rect x="3" y="8" width="10" height="4" fill="#2f7ad8"/><rect x="5" y="9" width="6" height="3" fill="#ffe38a"/></svg>
<svg style="position:absolute;left:300px;top:931px" width="13" height="16" viewBox="0 0 13 16"><rect x="0" y="0" width="13" height="16" fill="#6b7b8c"/><rect x="2" y="2" width="9" height="3" fill="#4fc3f7"/><path d="M2 7h2v2H2zM5.5 7h2v2h-2zM9 7h2v2H9zM2 10.5h2v2H2zM5.5 10.5h2v2h-2zM9 10.5h2v4H9zM2 14h2v1H2zM5.5 14h2v1h-2z" fill="#dfe6ee"/></svg>
<svg style="position:absolute;left:334px;top:931px" width="16" height="16" viewBox="0 0 16 16"><path d="M4 1L14 3L13 15L1 13z" fill="#c4e3ef"/><path d="M4 1L14 3L12.5 7L3 5z" fill="#8ec9df"/></svg>
<div style="position:absolute;left:370px;top:931px;width:16px;height:15px;background:#c8101a;color:#fff;font-size:12px;line-height:15px;text-align:center;font-weight:bold">64</div>
<svg style="position:absolute;left:407px;top:933px" width="15" height="12" viewBox="0 0 15 12"><rect x="0" y="0" width="15" height="12" fill="#4aa3df"/><rect x="1.5" y="2" width="5" height="7" fill="#d8f1ff"/><rect x="8" y="2" width="5.5" height="2" fill="#d8f1ff"/><rect x="8" y="6" width="5.5" height="2" fill="#d8f1ff"/></svg>
<svg style="position:absolute;left:442px;top:931px" width="16" height="16" viewBox="0 0 16 16"><circle cx="8" cy="8" r="5" fill="none" stroke="#fff" stroke-width="2.6" stroke-dasharray="2.2 1.7"/><circle cx="8" cy="8" r="4.2" fill="none" stroke="#fff" stroke-width="1.6"/></svg>
<svg style="position:absolute;left:477px;top:931px" width="18" height="16" viewBox="0 0 18 16"><rect x="7" y="1" width="10" height="14" fill="#1e6e42"/><path d="M9 4h6M9 7h6M9 10h6M9 13h6M12 2v12" stroke="#c5e0d0" stroke-width="0.9"/><rect x="0" y="1" width="10" height="14" fill="#107c41"/><text x="1.8" y="12" font-size="10" fill="#fff" font-family="Liberation Sans" font-weight="bold">X</text></svg>
<svg style="position:absolute;left:10px;top:960px" width="17" height="16" viewBox="0 0 17 16"><path d="M0 2.2L7 1.2V7.5H0zM8 1L17 0V7.5H8zM0 8.5H7V14.8L0 13.8zM8 8.5H17V16L8 15z" fill="#fff"/></svg>
<svg style="position:absolute;left:44px;top:959px" width="18" height="18" viewBox="0 0 18 18"><circle cx="11" cy="7" r="5.5" fill="none" stroke="#fff" stroke-width="1.3"/><path d="M7 11L1.5 16.5" stroke="#fff" stroke-width="1.4"/></svg>
<svg style="position:absolute;left:79px;top:960px" width="18" height="16" viewBox="0 0 18 16"><path d="M1 1h10M1 15h10M2 3v10M10 3v10M2 3h8M2 13h8" stroke="#ddd" stroke-width="1.2" fill="none"/><path d="M15 1v14" stroke="#ddd" stroke-width="1.1"/><circle cx="15" cy="7" r="1.3" fill="#fff"/></svg>
<svg style="position:absolute;left:118px;top:960px" width="16" height="16" viewBox="0 0 16 16"><path d="M5 4V2.5a3 3 0 0 1 6 0V4" fill="none" stroke="#eee" stroke-width="1.3"/><rect x="0.5" y="4" width="15" height="12" fill="#f2f2f2"/><rect x="5" y="7" width="2.7" height="2.7" fill="#f25022"/><rect x="8.3" y="7" width="2.7" height="2.7" fill="#7fba00"/><rect x="5" y="10.3" width="2.7" height="2.7" fill="#00a4ef"/><rect x="8.3" y="10.3" width="2.7" height="2.7" fill="#ffb900"/></svg>
<svg style="position:absolute;left:153px;top:960px" width="18" height="16" viewBox="0 0 18 16"><path d="M3 9.5h11a5.5 5.5 0 1 0-1.5 4" fill="none" stroke="#3fb9ec" stroke-width="3"/><path d="M2 14C0 11 6 3 16 1" fill="none" stroke="#f3c13a" stroke-width="1.3"/></svg>
<svg style="position:absolute;left:190px;top:960px" width="17" height="17" viewBox="0 0 17 17"><circle cx="8.5" cy="8.5" r="8" fill="#1591d8"/><path d="M3 10a6 6 0 0 1 11-2a4 4 0 0 1-4 3H6a3 3 0 0 0 6 3" fill="#5ed35c" opacity="0.9"/><circle cx="8.5" cy="10" r="2.6" fill="#0c6fbf"/></svg>
<svg style="position:absolute;left:226px;top:960px" width="17" height="17" viewBox="0 0 17 17"><circle cx="8.5" cy="8.5" r="8" fill="#db4437"/><path d="M8.5 8.5L1.6 4.5A8 8 0 0 0 8.5 16.5z" fill="#0f9d58"/><path d="M8.5 8.5L8.5 16.5A8 8 0 0 0 15.4 4.5z" fill="#ffcd40"/><circle cx="8.5" cy="8.5" r="3.6" fill="#fff"/><circle cx="8.5" cy="8.5" r="2.8" fill="#4285f4"/></svg>
<svg style="position:absolute;left:262px;top:961px" width="16" height="14" viewBox="0 0 16 14"><path d="M0 1h6l1.5 2H16v11H0z" fill="#f8d775"/><path d="M0 4h16v10H0z" fill="#ffe38a"/><rect x="3" y="8" width="10" height="4" fill="#2f7ad8"/><rect x="5" y="9" width="6" height="3" fill="#ffe38a"/></svg>
<svg style="position:absolute;left:298px;top:960px" width="16" height="16" viewBox="0 0 16 16"><ellipse cx="8" cy="3" rx="6" ry="2.5" fill="#e8d34a"/><rect x="1" y="8" width="14" height="8" fill="#5a7b8f"/><circle cx="8" cy="10" r="3" fill="#3ed1e6"/></svg>
<svg style="position:absolute;left:334px;top:960px" width="16" height="16" viewBox="0 0 16 16"><rect x="0" y="4" width="16" height="11" fill="#4a9fd8"/><circle cx="8" cy="10" r="4" fill="#f4b73b"/><path d="M5 4a3 3 0 0 1 6 0" fill="none" stroke="#aaa" stroke-width="1.4"/></svg>
<svg style="position:absolute;left:372px;top:960px" width="13" height="16" viewBox="0 0 13 16"><rect x="0" y="0" width="13" height="16" fill="#6b7b8c"/><rect x="2" y="2" width="9" height="3" fill="#4fc3f7"/><path d="M2 7h2v2H2zM5.5 7h2v2h-2zM9 7h2v2H9zM2 10.5h2v2H2zM5.5 10.5h2v2h-2zM9 10.5h2v4H9zM2 14h2v1H2zM5.5 14h2v1h-2z" fill="#dfe6ee"/></svg>
<svg style="position:absolute;left:406px;top:960px" width="16" height="16" viewBox="0 0 16 16"><path d="M4 1L14 3L13 15L1 13z" fill="#c4e3ef"/><path d="M4 1L14 3L12.5 7L3 5z" fill="#8ec9df"/></svg>
<svg style="position:absolute;left:443px;top:961px" width="15" height="15" viewBox="0 0 15 15"><rect width="15" height="15" fill="#fcd116"/><path d="M15 8L8 15H15z" fill="#6b4d8f"/></svg>
<svg style="position:absolute;left:478px;top:960px" width="16" height="16" viewBox="0 0 16 16"><circle cx="8" cy="8" r="8" fill="#fff"/><path d="M4 5l3-2h4l1 3l-1 6l-3 1l-1-2l2-1l-2-1l-3 0z" fill="#2dbe60"/></svg>
<svg style="position:absolute;left:514px;top:960px" width="17" height="16" viewBox="0 0 17 16"><rect x="0" y="2" width="16" height="13" fill="#1f6de8"/><path d="M2 9q3-3 5 0t5-1" stroke="#fff" fill="none" stroke-width="1.2"/><path d="M12 1l4 0l-4 5z" fill="#5c3fa8"/></svg>
<svg style="position:absolute;left:550px;top:960px" width="16" height="16" viewBox="0 0 16 16"><rect width="16" height="16" fill="#ffe600"/><ellipse cx="8" cy="7.5" rx="6" ry="4.5" fill="#3c1e1e"/><path d="M5 11l-1 3l3-2z" fill="#3c1e1e"/><text x="8" y="9.3" font-size="4.5" text-anchor="middle" fill="#ffe600" font-family="Liberation Sans" font-weight="bold">TALK</text></svg>
<div style="position:absolute;left:586px;top:960px;width:16px;height:15px;background:#c8101a;color:#fff;font-size:12px;line-height:15px;text-align:center;font-weight:bold">64</div>
<svg style="position:absolute;left:624px;top:960px" width="11" height="16" viewBox="0 0 11 16"><circle cx="3" cy="3" r="3" fill="#f24e1e"/><circle cx="7.5" cy="3" r="3" fill="#ff7262"/><circle cx="3" cy="8" r="3" fill="#a259ff"/><circle cx="7.5" cy="8" r="3" fill="#1abcfe"/><circle cx="3" cy="13" r="3" fill="#0acf83"/></svg>
<svg style="position:absolute;left:659px;top:962px" width="15" height="12" viewBox="0 0 15 12"><rect x="0" y="0" width="15" height="12" fill="#4aa3df"/><rect x="1.5" y="2" width="5" height="7" fill="#d8f1ff"/><rect x="8" y="2" width="5.5" height="2" fill="#d8f1ff"/><rect x="8" y="6" width="5.5" height="2" fill="#d8f1ff"/></svg>
<svg style="position:absolute;left:694px;top:960px" width="14" height="16" viewBox="0 0 14 16"><path d="M7 1L13 4V12L7 15L1 12V4z" fill="#1a2a40" stroke="#b8cde6" stroke-width="1.2"/><path d="M1 4L7 7L13 4M7 7V15" fill="none" stroke="#b8cde6" stroke-width="1.1"/></svg>
<svg style="position:absolute;left:729px;top:960px" width="16" height="16" viewBox="0 0 16 16"><circle cx="8" cy="8" r="5" fill="none" stroke="#fff" stroke-width="2.6" stroke-dasharray="2.2 1.7"/><circle cx="8" cy="8" r="4.2" fill="none" stroke="#fff" stroke-width="1.6"/></svg>
<svg style="position:absolute;left:765px;top:960px" width="16" height="16" viewBox="0 0 16 16"><circle cx="8" cy="8" r="7.5" fill="#0b0b0b" stroke="#3a6" stroke-width="0.6"/><path d="M8 2.5l3.5 5l-2.5 4h-2l-2.5-4z" fill="#fff"/><circle cx="8" cy="8" r="1" fill="#111"/></svg>
<svg style="position:absolute;left:801px;top:960px" width="17" height="17" viewBox="0 0 17 17"><circle cx="8.5" cy="8.5" r="8" fill="#db4437"/><path d="M8.5 8.5L1.6 4.5A8 8 0 0 0 8.5 16.5z" fill="#0f9d58"/><path d="M8.5 8.5L8.5 16.5A8 8 0 0 0 15.4 4.5z" fill="#ffcd40"/><circle cx="8.5" cy="8.5" r="3.6" fill="#fff"/><circle cx="8.5" cy="8.5" r="2.8" fill="#4285f4"/></svg>
<svg style="position:absolute;left:837px;top:960px" width="16" height="16" viewBox="0 0 16 16"><rect width="16" height="16" fill="#2b4a7e"/><rect x="1" y="1" width="6" height="4" fill="#dfe8f4"/><path d="M5 15L14 1" stroke="#9cd0f0" stroke-width="3"/><rect x="9" y="9" width="6" height="6" fill="#b6cfe8"/></svg>
<svg style="position:absolute;left:873px;top:960px" width="16" height="16" viewBox="0 0 16 16"><circle cx="8" cy="8" r="8" fill="#2d8cff"/><rect x="3.5" y="5.5" width="6" height="5" rx="1" fill="#fff"/><path d="M10 7.5l3-2v5l-3-2z" fill="#fff"/></svg>
<svg style="position:absolute;left:909px;top:960px" width="17" height="16" viewBox="0 0 17 16"><circle cx="9.5" cy="8" r="7.5" fill="#e5573f"/><rect x="0" y="3" width="9" height="10" fill="#c43e1c"/><text x="1.5" y="11.5" font-size="8.5" fill="#fff" font-family="Liberation Sans" font-weight="bold">P</text></svg>
<div style="position:absolute;left:256px;top:951px;width:28px;height:2px;background:#76b9ed"></div>
<div style="position:absolute;left:472px;top:951px;width:28px;height:2px;background:#76b9ed"></div>
<div style="position:absolute;left:184px;top:981px;width:28px;height:2px;background:#76b9ed"></div>
<div style="position:absolute;left:220px;top:981px;width:28px;height:2px;background:#76b9ed"></div>
<div style="position:absolute;left:256px;top:981px;width:28px;height:2px;background:#76b9ed"></div>
<div style="position:absolute;left:687px;top:981px;width:28px;height:2px;background:#76b9ed"></div>
<div style="position:absolute;left:723px;top:981px;width:28px;height:2px;background:#76b9ed"></div>
<div style="position:absolute;left:759px;top:981px;width:28px;height:2px;background:#76b9ed"></div>
<div style="position:absolute;left:795px;top:981px;width:28px;height:2px;background:#76b9ed"></div>
<div style="position:absolute;left:831px;top:981px;width:35px;height:2px;background:#76b9ed"></div>
<div style="position:absolute;left:867px;top:981px;width:28px;height:2px;background:#76b9ed"></div>
<div style="position:absolute;left:903px;top:981px;width:28px;height:2px;background:#76b9ed"></div>
<svg style="position:absolute;left:1248px;top:935px" width="12" height="7" viewBox="0 0 12 7"><path d="M1 6l5-5l5 5" fill="none" stroke="#fff" stroke-width="1.2"/></svg>
<svg style="position:absolute;left:1272px;top:932px" width="14" height="14" viewBox="0 0 14 14"><rect x="1" y="2" width="8" height="10" fill="none" stroke="#ddd"/><rect x="9" y="5" width="4" height="5" fill="none" stroke="#ddd"/><path d="M2 13h6" stroke="#ddd"/></svg>
<svg style="position:absolute;left:1293px;top:933px" width="16" height="12" viewBox="0 0 16 12"><rect x="2" y="3" width="13" height="7" fill="none" stroke="#ddd"/><rect x="3" y="4" width="10" height="5" fill="#ddd"/><circle cx="2" cy="3" r="2" fill="#ddd"/></svg>
<svg style="position:absolute;left:1317px;top:932px" width="17" height="15" viewBox="0 0 17 15"><rect x="3.5" y="1.5" width="13" height="9" fill="none" stroke="#ddd"/><path d="M10 11v3M7 14h6M0 3h4" stroke="#ddd"/></svg>
<svg style="position:absolute;left:1340px;top:932px" width="17" height="15" viewBox="0 0 17 15"><path d="M1 5h3l4-3.5v12L4 10H1z" fill="none" stroke="#ddd"/><path d="M10 5q1.5 2.5 0 5M12.5 3q3 4.5 0 9M15 1q4 6.5 0 13" fill="none" stroke="#ddd"/></svg>
<div style="position:absolute;left:1071px;top:929px;width:600px;text-align:center;white-space:nowrap;font-size:17px;line-height:20px;color:#fff">A</div>
<div style="position:absolute;left:1115px;top:930px;width:600px;text-align:center;white-space:nowrap;font-size:12px;line-height:18px;color:#fff">오전 10:46</div>
<svg style="position:absolute;left:1461px;top:931px" width="16" height="16" viewBox="0 0 16 16"><path d="M0 0h16v11h-9l-3 3v-3H0z" fill="#fff"/><path d="M3 3h10M3 5.5h10M3 8h7" stroke="#222" stroke-width="1"/></svg>
<svg style="position:absolute;left:1147px;top:964px" width="12" height="7" viewBox="0 0 12 7"><path d="M1 6l5-5l5 5" fill="none" stroke="#fff" stroke-width="1.2"/></svg>
<svg style="position:absolute;left:1178px;top:959px" width="10" height="17" viewBox="0 0 10 17"><rect x="2.5" y="0.5" width="5" height="10" rx="2.5" fill="#fff"/><path d="M1 8a4 4 0 0 0 8 0M5 12v3M2.5 15.5h5" fill="none" stroke="#fff"/></svg>
<svg style="position:absolute;left:1207px;top:962px" width="16" height="12" viewBox="0 0 16 12"><rect x="2" y="3" width="13" height="7" fill="none" stroke="#ddd"/><rect x="3" y="4" width="10" height="5" fill="#ddd"/><circle cx="2" cy="3" r="2" fill="#ddd"/></svg>
<svg style="position:absolute;left:1238px;top:961px" width="17" height="15" viewBox="0 0 17 15"><path d="M1 5h3l4-3.5v12L4 10H1z" fill="none" stroke="#ddd"/><path d="M10 5q1.5 2.5 0 5M12.5 3q3 4.5 0 9M15 1q4 6.5 0 13" fill="none" stroke="#ddd"/></svg>
<svg style="position:absolute;left:1271px;top:961px" width="16" height="15" viewBox="0 0 16 15"><path d="M1 7a10 10 0 0 1 14 0M3.5 9.5a6.5 6.5 0 0 1 9 0M6 12a3 3 0 0 1 4 0" fill="none" stroke="#ddd" stroke-width="1.1"/><circle cx="8" cy="13.5" r="1" fill="#ddd"/></svg>
<svg style="position:absolute;left:1300px;top:959px" width="17" height="17" viewBox="0 0 17 17"><path d="M2 15L12 3a2 2 0 0 1 3 3L5 16z" fill="none" stroke="#ddd" stroke-width="1.2"/><path d="M1 10q3-4 6-1" fill="none" stroke="#ddd"/></svg>
<div style="position:absolute;left:1035px;top:958px;width:600px;text-align:center;white-space:nowrap;font-size:17px;line-height:20px;color:#fff">A</div>
<div style="position:absolute;left:1355px;top:960px;width:18px;height:17px;background:#fff"></div>
<div style="position:absolute;left:1064px;top:958px;width:600px;text-align:center;white-space:nowrap;font-size:13px;line-height:20px;color:#111;font-weight:bold">한</div>
<div style="position:absolute;left:1115px;top:959px;width:600px;text-align:center;white-space:nowrap;font-size:12px;line-height:18px;color:#fff">오전 10:46</div>
<svg style="position:absolute;left:1461px;top:960px" width="16" height="16" viewBox="0 0 16 16"><path d="M0.5 0.5h15v11h-4q0 3-4 3.5M0.5 0.5v11h7" fill="none" stroke="#fff" stroke-width="1.1"/></svg>
<div style="position:absolute;left:1501px;top:0px;width:402px;height:996px;background:#fff"></div>
<div style="position:absolute;left:1901px;top:0px;width:1px;height:996px;background:#a9a9a9"></div>
<svg style="position:absolute;left:1525px;top:26px" width="12" height="8" viewBox="0 0 12 8"><path d="M1.5 1.5l4.5 4.5l4.5-4.5" fill="none" stroke="#555568" stroke-width="1.6"/></svg>
<div style="position:absolute;left:1400px;top:18px;width:600px;text-align:center;white-space:nowrap;font-size:15.5px;line-height:22px;font-weight:bold;color:#232333">참가자(64)</div>
<div style="position:absolute;left:1530px;top:64px;width:342px;height:31px;background:#f0f0f5;border-radius:8px"></div>
<div style="position:absolute;left:1701px;top:65px;width:170px;height:29px;background:#fff;border-radius:7px;box-shadow:0 1px 2px rgba(0,0,0,0.12)"></div>
<div style="position:absolute;left:1314px;top:70px;width:600px;text-align:center;white-space:nowrap;font-size:13.5px;line-height:20px;font-weight:bold;color:#555">토론자(8)</div>
<div style="position:absolute;left:1486px;top:70px;width:600px;text-align:center;white-space:nowrap;font-size:13.5px;line-height:20px;font-weight:bold;color:#0e71eb">참석자(56)</div>
<div style="position:absolute;left:1525px;top:107px;width:354px;height:40px;border:1.5px solid #b8b6d8;border-radius:9px;background:#fff"></div>
<svg style="position:absolute;left:1539px;top:118px" width="17" height="17" viewBox="0 0 17 17"><circle cx="7" cy="7" r="5.5" fill="none" stroke="#555" stroke-width="1.5"/><path d="M11 11l4.5 4.5" stroke="#555" stroke-width="1.6"/></svg>
<div style="position:absolute;left:1561px;top:116px;white-space:nowrap;font-size:15px;line-height:20px;color:#6e6e7e">검색</div>
<div style="position:absolute;left:1537px;top:158px;width:34px;height:33px;background:#24a85f;border-radius:7px"></div>
<div style="position:absolute;left:1254px;top:164px;width:600px;text-align:center;white-space:nowrap;font-size:14px;line-height:20px;color:#fff;font-weight:bold">강</div>
<div style="position:absolute;left:1586px;top:165px;white-space:nowrap;font-size:15px;line-height:20px;color:#232333">강형석(채소팀)</div>
<div style="position:absolute;left:1889px;top:151px;width:9px;height:54px;background:#f0f0f5;border-radius:5px"></div>
<div style="position:absolute;left:1889px;top:150px;width:9px;height:10px;background:#a7a7b0;border-radius:5px"></div>
<div style="position:absolute;left:1643px;top:227px;width:117px;height:29px;background:#f0f0f5;border-radius:8px"></div>
<div style="position:absolute;left:1401px;top:231px;width:600px;text-align:center;white-space:nowrap;font-size:14px;line-height:20px;color:#b4b4bc">모든 손 내리기</div>
<div style="position:absolute;left:1527px;top:273px;width:374px;height:1px;background:#e6e6ea"></div>
<svg style="position:absolute;left:1525px;top:298px" width="12" height="8" viewBox="0 0 12 8"><path d="M1.5 1.5l4.5 4.5l4.5-4.5" fill="none" stroke="#555568" stroke-width="1.6"/></svg>
<div style="position:absolute;left:1400px;top:290px;width:600px;text-align:center;white-space:nowrap;font-size:15.5px;line-height:22px;font-weight:bold;color:#232333">채팅</div>
<div style="position:absolute;left:1888px;top:332px;width:10px;height:418px;background:#f0f0f5;border-radius:5px"></div>
<div style="position:absolute;left:1888px;top:712px;width:10px;height:20px;background:#a7a7b0;border-radius:5px"></div>
<div style="position:absolute;left:1525px;top:345px;white-space:nowrap;color:#747487;font-size:14px;line-height:20px">발신자</div>
<div style="position:absolute;left:1719px;top:345px;white-space:nowrap;font-size:14px;line-height:20px;letter-spacing:0.35px"><span style="color:#747487">수신자</span><span style="color:#0e71eb">모든 토론자:</span></div>
<div style="position:absolute;left:1525px;top:372px;white-space:nowrap;color:#2a2a36;font-size:17px;line-height:24px;letter-spacing:0.6px">lfl 계산이 거꾸로 되었는데요. 2020년 /</div>
<div style="position:absolute;left:1525px;top:406px;white-space:nowrap;color:#2a2a36;font-size:17px;line-height:24px;letter-spacing:0.6px">2019년</div>
<div style="position:absolute;left:1525px;top:451px;white-space:nowrap;font-size:14px;line-height:20px;letter-spacing:0.35px"><span style="color:#747487">발신자</span><span style="color:#0e71eb">Masocampus...</span> <span style="color:#747487">수신자</span><span style="color:#0e71eb">모든 토론자 및 참석자:</span></div>
<div style="position:absolute;left:1525px;top:476px;white-space:nowrap;color:#2a2a36;font-size:17px;line-height:24px;letter-spacing:0.6px">C7셀 선택 - 보기 - 틀고정</div>
<div style="position:absolute;left:1525px;top:522px;white-space:nowrap;color:#747487;font-size:14px;line-height:20px">나로부터 에게</div>
<div style="position:absolute;left:1262px;top:522px;width:600px;text-align:right;white-space:nowrap;color:#0e71eb;font-size:14px;line-height:20px">모든 토론자:</div>
<div style="position:absolute;left:1525px;top:548px;white-space:nowrap;color:#2a2a36;font-size:17px;line-height:24px;letter-spacing:0.6px">안녕하세요 선생님,</div>
<div style="position:absolute;left:1525px;top:581px;white-space:nowrap;color:#2a2a36;font-size:17px;line-height:24px;letter-spacing:0.6px">지금 손들기 버튼 누르셨는데 문의사항</div>
<div style="position:absolute;left:1525px;top:615px;white-space:nowrap;color:#2a2a36;font-size:17px;line-height:24px;letter-spacing:0.6px">있으신가요?</div>
<div style="position:absolute;left:1525px;top:660px;white-space:nowrap;font-size:14px;line-height:20px;letter-spacing:0.35px"><span style="color:#747487">발신자</span><span style="color:#0e71eb">Masocampus...</span> <span style="color:#747487">수신자</span><span style="color:#0e71eb">모든 토론자 및 참석자:</span></div>
<div style="position:absolute;left:1525px;top:685px;white-space:nowrap;color:#2a2a36;font-size:17px;line-height:24px;letter-spacing:0.6px">C35 C45 내용 삭제</div>
<div style="position:absolute;left:1525px;top:720px;white-space:nowrap;color:#2a2a36;font-size:17px;line-height:24px;letter-spacing:0.6px">D35셀 =C19/C7-1</div>
<div style="position:absolute;left:1502px;top:752px;width:399px;height:1px;background:#e6e6ea"></div>
<div style="position:absolute;left:1523px;top:772px;white-space:nowrap;color:#232333;font-size:14px;line-height:20px">받는 사람:</div>
<div style="position:absolute;left:1600px;top:769px;width:171px;height:29px;background:#f0f0f5;border-radius:8px"></div>
<div style="position:absolute;left:1609px;top:773px;white-space:nowrap;color:#232333;font-size:14px;line-height:20px">모든 토론자 및 참석자</div>
<svg style="position:absolute;left:1752px;top:779px" width="10" height="7" viewBox="0 0 10 7"><path d="M1 1.5l4 4l4-4" fill="none" stroke="#232333" stroke-width="1.6"/></svg>
<div style="position:absolute;left:1852px;top:767px;width:30px;height:30px;border:1px solid #dcdce4;border-radius:7px;background:#fff"></div>
<div style="position:absolute;left:1567px;top:772px;width:600px;text-align:center;white-space:nowrap;color:#444;font-size:14px;line-height:20px;font-weight:bold">···</div>
<div style="position:absolute;left:1523px;top:805px;white-space:nowrap;color:#747487;font-size:15px;line-height:22px;letter-spacing:0.4px">여기에 메시지 입력...</div>
</body></html>
